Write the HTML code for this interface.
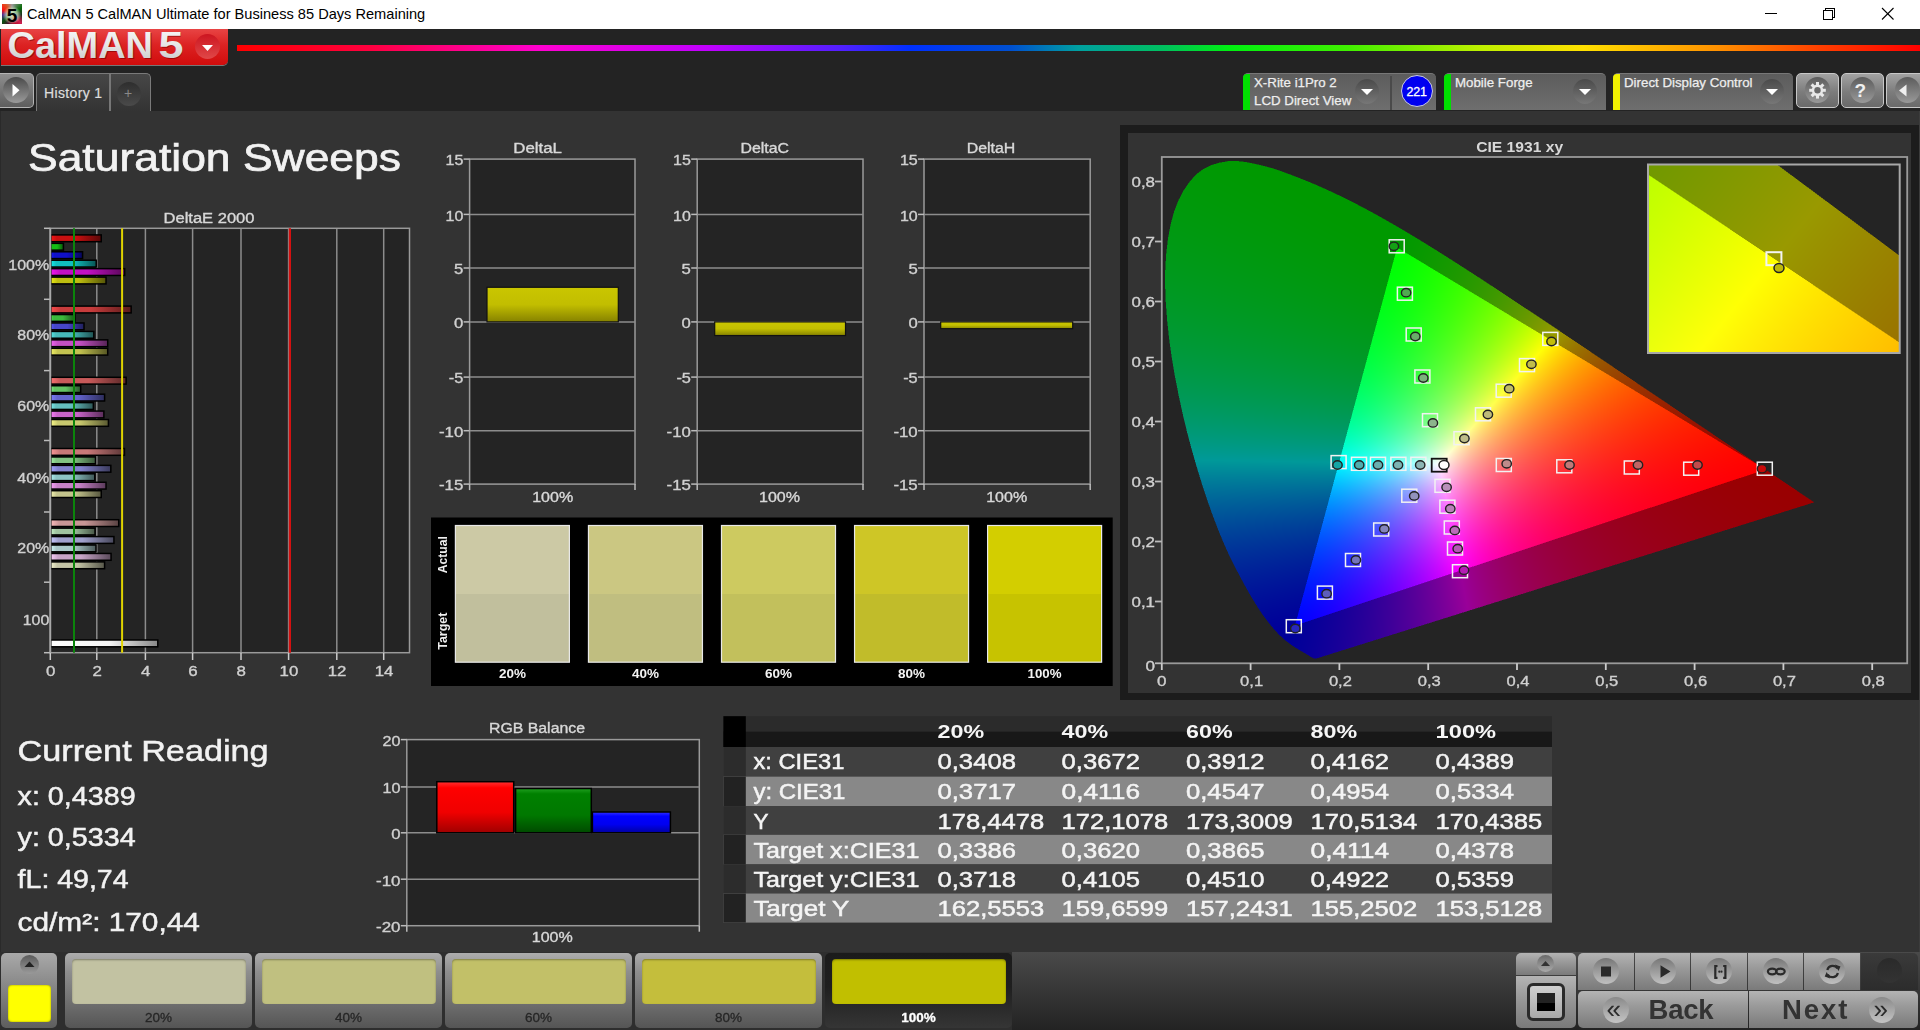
<!DOCTYPE html>
<html><head><meta charset="utf-8"><title>CalMAN</title>
<style>
html,body{margin:0;padding:0}
body{width:1920px;height:1030px;overflow:hidden;position:relative;background:#333;font-family:"Liberation Sans",sans-serif}
svg text{font-family:"Liberation Sans",sans-serif}
</style></head><body>
<div style="position:absolute;left:0px;top:0px;width:1920px;height:29px;background:#fff"></div><div style="position:absolute;left:2px;top:4px;width:20px;height:20px;background:radial-gradient(circle at 50% 55%,rgba(215,245,200,.95) 0,rgba(200,225,190,.7) 38%,rgba(0,0,0,0) 62%),conic-gradient(from 0deg,#9a9a9a 0deg,#0a6a0a 55deg,#203020 95deg,#d02050 135deg,#b00020 170deg,#4a1030 200deg,#0a5010 230deg,#4a2a90 265deg,#ff1010 295deg,#e05020 325deg,#9a9a9a 360deg)"></div><svg style="position:absolute;left:2px;top:4px" width="20" height="20"><text x="10" y="17.5" text-anchor="middle" font-family="Liberation Sans" font-weight="700" font-size="19" fill="#000">5</text></svg><div style="position:absolute;left:27px;top:7px;font-size:14.6px;line-height:14.6px;color:#000;font-weight:400;white-space:nowrap;">CalMAN 5 CalMAN Ultimate for Business 85 Days Remaining</div><svg style="position:absolute;left:1750px;top:0" width="170" height="29"><g stroke="#000" stroke-width="1" fill="none" shape-rendering="crispEdges"><line x1="15" y1="13.5" x2="27" y2="13.5"/><rect x="73.5" y="10.5" width="9" height="9"/><path d="M75.5 10.5 V8.5 H84.5 V17.5 H82.5"/></g><g stroke="#000" stroke-width="1.1" fill="none"><line x1="132" y1="8" x2="143.5" y2="19.5"/><line x1="143.5" y1="8" x2="132" y2="19.5"/></g></svg><div style="position:absolute;left:0px;top:29px;width:1920px;height:82px;background:#232323"></div><div style="position:absolute;left:1px;top:29px;width:227px;height:36px;background:linear-gradient(#e84444,#dc2222 45%,#d10c0c);border-radius:0 0 5px 0;box-shadow:0 1px 0 #777"></div><svg style="position:absolute;left:0;top:26px" width="230" height="40"><defs><linearGradient id="lg" x1="0" x2="0" y1="0" y2="1"><stop offset="0" stop-color="#fafafa"/><stop offset="0.5" stop-color="#e6e6e6"/><stop offset="1" stop-color="#c4c4c4"/></linearGradient></defs><g font-family="Liberation Sans" font-weight="700" font-size="36"><text x="8.5" y="32.8" fill="#7a0000" opacity="0.6" textLength="145.5" lengthAdjust="spacingAndGlyphs">CalMAN</text><text x="159.5" y="32.8" fill="#7a0000" opacity="0.6" textLength="24" lengthAdjust="spacingAndGlyphs">5</text><text x="7.5" y="31.8" fill="url(#lg)" textLength="145.5" lengthAdjust="spacingAndGlyphs">CalMAN</text><text x="158.5" y="31.8" fill="url(#lg)" textLength="25" lengthAdjust="spacingAndGlyphs">5</text></g></svg><div style="position:absolute;left:195px;top:34px;width:25px;height:25px;border-radius:50%;background:linear-gradient(#cc1520,#e04848)"></div><svg style="position:absolute;left:195px;top:34px" width="25" height="25"><path d="M7 11 H18 L12.5 17 Z" fill="#fff"/></svg><div style="position:absolute;left:237px;top:45px;width:1683px;height:6px;background:linear-gradient(to right,#ff0000 0%,#ff0040 8%,#ff00d0 18%,#c000ff 28%,#5020ff 36%,#0030ff 40%,#0050d0 46%,#00a0a0 50%,#00c060 55%,#00f010 59%,#40f000 66%,#c0f000 74%,#ffe000 80%,#ff9000 88%,#ff4000 94%,#ff0000 100%)"></div><div style="position:absolute;left:0px;top:73px;width:34px;height:35px;background:linear-gradient(#8e8e8e,#5e5e5e);border:1.5px solid #b4b4b4;border-left:none;border-radius:0 5px 5px 0;box-sizing:border-box"></div><div style="position:absolute;left:3px;top:77px;width:26px;height:26px;border-radius:50%;background:linear-gradient(#4a4a4a,#9a9a9a)"></div><svg style="position:absolute;left:0;top:73px" width="34" height="34"><path d="M12.5 11 L19.5 17.3 L12.5 23.6 Z" fill="#fff"/></svg><div style="position:absolute;left:36px;top:73px;width:115px;height:38px;background:linear-gradient(#474747,#333);border:1.5px solid #7a7a7a;border-bottom:none;border-radius:5px 5px 0 0;box-sizing:border-box"></div><div style="position:absolute;left:109px;top:74px;width:1.5px;height:37px;background:#777"></div><div style="position:absolute;left:44px;top:85.5px;font-size:14px;line-height:14px;color:#ddd;font-weight:400;white-space:nowrap;letter-spacing:0.35px;-webkit-text-stroke:0.2px #ddd">History 1</div><div style="position:absolute;left:117px;top:82px;width:24px;height:24px;border-radius:50%;background:linear-gradient(#2e2e2e,#4a4a4a)"></div><div style="position:absolute;left:124px;top:86px;font-size:14px;line-height:14px;color:#888;font-weight:400;white-space:nowrap;">+</div><div style="position:absolute;left:1243px;top:73px;width:193px;height:37px;background:linear-gradient(#5c5c5c,#6e6e6e);border-radius:5px 5px 0 0;border-top:1px solid #777;box-sizing:border-box"></div><div style="position:absolute;left:1243px;top:74px;width:7px;height:36px;background:linear-gradient(#00e000,#00e000);border-radius:4px 0 0 0"></div><div style="position:absolute;left:1254px;top:76.0px;font-size:13.3px;line-height:13.3px;color:#eee;font-weight:400;white-space:nowrap;-webkit-text-stroke:0.25px #eee">X-Rite i1Pro 2</div><div style="position:absolute;left:1254px;top:93.5px;font-size:13.3px;line-height:13.3px;color:#eee;font-weight:400;white-space:nowrap;-webkit-text-stroke:0.25px #eee">LCD Direct View</div><div style="position:absolute;left:1355px;top:79px;width:24px;height:25px;border-radius:50%;background:linear-gradient(#4a4a4a,#777)"></div><svg style="position:absolute;left:1355px;top:79px" width="24" height="25"><path d="M6 10 H18 L12 16 Z" fill="#fff"/></svg><div style="position:absolute;left:1390px;top:76px;width:2px;height:34px;background:#4a4a4a"></div><div style="position:absolute;left:1401px;top:75px;width:32px;height:32px;border-radius:50%;background:#0000f0;border:1.5px solid #ccd;box-sizing:border-box"></div><div style="position:absolute;left:1406.5px;top:85.5px;font-size:12.5px;line-height:12.5px;color:#fff;font-weight:400;white-space:nowrap;letter-spacing:-0.2px;-webkit-text-stroke:0.3px #fff">221</div><div style="position:absolute;left:1444px;top:73px;width:162px;height:37px;background:linear-gradient(#5c5c5c,#6e6e6e);border-radius:5px 5px 0 0;border-top:1px solid #777;box-sizing:border-box"></div><div style="position:absolute;left:1444px;top:74px;width:7px;height:36px;background:linear-gradient(#00e000,#00e000);border-radius:4px 0 0 0"></div><div style="position:absolute;left:1455px;top:76.0px;font-size:13.3px;line-height:13.3px;color:#eee;font-weight:400;white-space:nowrap;-webkit-text-stroke:0.25px #eee">Mobile Forge</div><div style="position:absolute;left:1573px;top:79px;width:24px;height:25px;border-radius:50%;background:linear-gradient(#4a4a4a,#777)"></div><svg style="position:absolute;left:1573px;top:79px" width="24" height="25"><path d="M6 10 H18 L12 16 Z" fill="#fff"/></svg><div style="position:absolute;left:1613px;top:73px;width:180px;height:37px;background:linear-gradient(#5c5c5c,#6e6e6e);border-radius:5px 5px 0 0;border-top:1px solid #777;box-sizing:border-box"></div><div style="position:absolute;left:1613px;top:74px;width:7px;height:36px;background:linear-gradient(#f0f000,#f0f000);border-radius:4px 0 0 0"></div><div style="position:absolute;left:1624px;top:76.0px;font-size:13.3px;line-height:13.3px;color:#eee;font-weight:400;white-space:nowrap;-webkit-text-stroke:0.25px #eee">Direct Display Control</div><div style="position:absolute;left:1760px;top:79px;width:24px;height:25px;border-radius:50%;background:linear-gradient(#4a4a4a,#777)"></div><svg style="position:absolute;left:1760px;top:79px" width="24" height="25"><path d="M6 10 H18 L12 16 Z" fill="#fff"/></svg><div style="position:absolute;left:1796px;top:73px;width:43px;height:35px;background:linear-gradient(#a2a2a2,#7c7c7c 55%,#6a6a6a);border:1.5px solid #c8c8c8;border-radius:5px;box-sizing:border-box"></div><div style="position:absolute;left:1805px;top:77px;width:25px;height:26px;border-radius:50%;background:linear-gradient(#5c5c5c,#999)"></div><div style="position:absolute;left:1841px;top:73px;width:43px;height:35px;background:linear-gradient(#a2a2a2,#7c7c7c 55%,#6a6a6a);border:1.5px solid #c8c8c8;border-radius:5px;box-sizing:border-box"></div><div style="position:absolute;left:1850px;top:77px;width:25px;height:26px;border-radius:50%;background:linear-gradient(#5c5c5c,#999)"></div><div style="position:absolute;left:1886px;top:73px;width:43px;height:35px;background:linear-gradient(#a2a2a2,#7c7c7c 55%,#6a6a6a);border:1.5px solid #c8c8c8;border-radius:5px;box-sizing:border-box"></div><div style="position:absolute;left:1895px;top:77px;width:25px;height:26px;border-radius:50%;background:linear-gradient(#5c5c5c,#999)"></div><svg style="position:absolute;left:1796px;top:73px" width="43" height="35"><g fill="#e8e8e8"><circle cx="21.5" cy="17.3" r="5.8"/><rect x="20" y="9" width="3" height="4" transform="rotate(0 21.5 17.3)"/><rect x="20" y="9" width="3" height="4" transform="rotate(45 21.5 17.3)"/><rect x="20" y="9" width="3" height="4" transform="rotate(90 21.5 17.3)"/><rect x="20" y="9" width="3" height="4" transform="rotate(135 21.5 17.3)"/><rect x="20" y="9" width="3" height="4" transform="rotate(180 21.5 17.3)"/><rect x="20" y="9" width="3" height="4" transform="rotate(225 21.5 17.3)"/><rect x="20" y="9" width="3" height="4" transform="rotate(270 21.5 17.3)"/><rect x="20" y="9" width="3" height="4" transform="rotate(315 21.5 17.3)"/></g><circle cx="21.5" cy="17.3" r="3.2" fill="#6a6a6a"/></svg><div style="position:absolute;left:1854.5px;top:81px;font-size:19px;line-height:19px;color:#f0f0f0;font-weight:700;white-space:nowrap;">?</div><svg style="position:absolute;left:1886px;top:73px" width="34" height="35"><path d="M20.5 11.5 L13 17.5 L20.5 23.5 Z" fill="#f0f0f0"/></svg>
<div style="position:absolute;left:0;top:111px;width:1px;height:841px;background:#2a2a2a"></div>
<div style="position:absolute;left:1919px;top:111px;width:1px;height:841px;background:#3c3c3c"></div>
<div style="position:absolute;left:1120px;top:125px;width:799px;height:575px;background:#1c1c1c"></div>
<div style="position:absolute;left:1128px;top:133px;width:783px;height:560px;background:#333"></div>
<svg style="position:absolute;left:0;top:0" width="1920" height="1030"><defs><clipPath id="plotclip"><rect x="1161" y="157" width="747" height="507"/></clipPath></defs><rect x="1161" y="157" width="747" height="507" fill="#242424"/><g clip-path="url(#plotclip)"><polygon points="1439.5,464.1 1316.4,658.5 1316.3,658.5" fill="#170099" stroke="#170099" stroke-width="0.6"/><polygon points="1439.5,464.1 1316.3,658.5 1316.1,658.6" fill="#170099" stroke="#170099" stroke-width="0.6"/><polygon points="1439.5,464.1 1316.1,658.6 1315.9,658.6" fill="#160099" stroke="#160099" stroke-width="0.6"/><polygon points="1439.5,464.1 1315.9,658.6 1315.7,658.6" fill="#160099" stroke="#160099" stroke-width="0.6"/><polygon points="1439.5,464.1 1315.7,658.6 1315.4,658.6" fill="#160099" stroke="#160099" stroke-width="0.6"/><polygon points="1439.5,464.1 1315.4,658.6 1315.1,658.6" fill="#160099" stroke="#160099" stroke-width="0.6"/><polygon points="1439.5,464.1 1315.1,658.6 1314.6,658.6" fill="#160099" stroke="#160099" stroke-width="0.6"/><polygon points="1439.5,464.1 1314.6,658.6 1314.0,658.4" fill="#160099" stroke="#160099" stroke-width="0.6"/><polygon points="1439.5,464.1 1314.0,658.4 1313.5,658.3" fill="#150099" stroke="#150099" stroke-width="0.6"/><polygon points="1439.5,464.1 1313.5,658.3 1313.0,658.0" fill="#150099" stroke="#150099" stroke-width="0.6"/><polygon points="1439.5,464.1 1313.0,658.0 1312.5,657.7" fill="#150099" stroke="#150099" stroke-width="0.6"/><polygon points="1439.5,464.1 1312.5,657.7 1311.8,657.4" fill="#140099" stroke="#140099" stroke-width="0.6"/><polygon points="1439.5,464.1 1311.8,657.4 1311.0,656.9" fill="#140099" stroke="#140099" stroke-width="0.6"/><polygon points="1439.5,464.1 1311.0,656.9 1310.0,656.3" fill="#130099" stroke="#130099" stroke-width="0.6"/><polygon points="1439.5,464.1 1310.0,656.3 1309.0,655.7" fill="#130099" stroke="#130099" stroke-width="0.6"/><polygon points="1439.5,464.1 1309.0,655.7 1307.8,655.0" fill="#120099" stroke="#120099" stroke-width="0.6"/><polygon points="1439.5,464.1 1307.8,655.0 1306.4,654.1" fill="#120099" stroke="#120099" stroke-width="0.6"/><polygon points="1439.5,464.1 1306.4,654.1 1304.9,653.2" fill="#110099" stroke="#110099" stroke-width="0.6"/><polygon points="1439.5,464.1 1304.9,653.2 1303.0,652.1" fill="#100099" stroke="#100099" stroke-width="0.6"/><polygon points="1439.5,464.1 1303.0,652.1 1300.9,650.9" fill="#0f0099" stroke="#0f0099" stroke-width="0.6"/><polygon points="1439.5,464.1 1300.9,650.9 1298.5,649.5" fill="#0d0099" stroke="#0d0099" stroke-width="0.6"/><polygon points="1439.5,464.1 1298.5,649.5 1295.9,647.9" fill="#0c0099" stroke="#0c0099" stroke-width="0.6"/><polygon points="1439.5,464.1 1295.9,647.9 1292.9,646.0" fill="#0b0199" stroke="#0b0199" stroke-width="0.6"/><polygon points="1439.5,464.1 1292.9,646.0 1289.7,643.7" fill="#090299" stroke="#090299" stroke-width="0.6"/><polygon points="1439.5,464.1 1289.7,643.7 1286.1,641.0" fill="#070399" stroke="#070399" stroke-width="0.6"/><polygon points="1439.5,464.1 1286.1,641.0 1282.1,637.6" fill="#060599" stroke="#060599" stroke-width="0.6"/><polygon points="1439.5,464.1 1282.1,637.6 1277.4,632.9" fill="#030799" stroke="#030799" stroke-width="0.6"/><polygon points="1439.5,464.1 1277.4,632.9 1272.0,626.8" fill="#010999" stroke="#010999" stroke-width="0.6"/><polygon points="1439.5,464.1 1272.0,626.8 1265.9,619.2" fill="#000d99" stroke="#000d99" stroke-width="0.6"/><polygon points="1439.5,464.1 1265.9,619.2 1259.1,609.4" fill="#001299" stroke="#001299" stroke-width="0.6"/><polygon points="1439.5,464.1 1259.1,609.4 1251.4,597.1" fill="#001899" stroke="#001899" stroke-width="0.6"/><polygon points="1439.5,464.1 1251.4,597.1 1242.9,581.9" fill="#002199" stroke="#002199" stroke-width="0.6"/><polygon points="1439.5,464.1 1242.9,581.9 1233.1,563.3" fill="#002c99" stroke="#002c99" stroke-width="0.6"/><polygon points="1439.5,464.1 1233.1,563.3 1222.8,541.1" fill="#003c99" stroke="#003c99" stroke-width="0.6"/><polygon points="1439.5,464.1 1222.8,541.1 1212.4,514.7" fill="#005099" stroke="#005099" stroke-width="0.6"/><polygon points="1439.5,464.1 1212.4,514.7 1202.1,484.5" fill="#006b99" stroke="#006b99" stroke-width="0.6"/><polygon points="1439.5,464.1 1202.1,484.5 1191.9,450.4" fill="#008f99" stroke="#008f99" stroke-width="0.6"/><polygon points="1439.5,464.1 1191.9,450.4 1182.7,413.9" fill="#009979" stroke="#009979" stroke-width="0.6"/><polygon points="1439.5,464.1 1182.7,413.9 1174.9,376.1" fill="#00995b" stroke="#00995b" stroke-width="0.6"/><polygon points="1439.5,464.1 1174.9,376.1 1169.1,338.5" fill="#009945" stroke="#009945" stroke-width="0.6"/><polygon points="1439.5,464.1 1169.1,338.5 1165.8,302.4" fill="#009934" stroke="#009934" stroke-width="0.6"/><polygon points="1439.5,464.1 1165.8,302.4 1165.3,268.6" fill="#009927" stroke="#009927" stroke-width="0.6"/><polygon points="1439.5,464.1 1165.3,268.6 1168.1,238.0" fill="#00991e" stroke="#00991e" stroke-width="0.6"/><polygon points="1439.5,464.1 1168.1,238.0 1174.1,211.4" fill="#009916" stroke="#009916" stroke-width="0.6"/><polygon points="1439.5,464.1 1174.1,211.4 1183.8,190.1" fill="#009910" stroke="#009910" stroke-width="0.6"/><polygon points="1439.5,464.1 1183.8,190.1 1196.3,174.3" fill="#00990c" stroke="#00990c" stroke-width="0.6"/><polygon points="1439.5,464.1 1196.3,174.3 1211.2,165.2" fill="#009909" stroke="#009909" stroke-width="0.6"/><polygon points="1439.5,464.1 1211.2,165.2 1227.8,161.2" fill="#009907" stroke="#009907" stroke-width="0.6"/><polygon points="1439.5,464.1 1227.8,161.2 1245.2,161.9" fill="#009906" stroke="#009906" stroke-width="0.6"/><polygon points="1439.5,464.1 1245.2,161.9 1263.2,165.8" fill="#009905" stroke="#009905" stroke-width="0.6"/><polygon points="1439.5,464.1 1263.2,165.8 1281.3,171.2" fill="#009904" stroke="#009904" stroke-width="0.6"/><polygon points="1439.5,464.1 1281.3,171.2 1299.2,178.0" fill="#009904" stroke="#009904" stroke-width="0.6"/><polygon points="1439.5,464.1 1299.2,178.0 1316.3,185.0" fill="#009903" stroke="#009903" stroke-width="0.6"/><polygon points="1439.5,464.1 1316.3,185.0 1333.1,192.5" fill="#009903" stroke="#009903" stroke-width="0.6"/><polygon points="1439.5,464.1 1333.1,192.5 1349.5,200.5" fill="#009903" stroke="#009903" stroke-width="0.6"/><polygon points="1439.5,464.1 1349.5,200.5 1365.7,208.9" fill="#009903" stroke="#009903" stroke-width="0.6"/><polygon points="1439.5,464.1 1365.7,208.9 1381.8,217.7" fill="#009903" stroke="#009903" stroke-width="0.6"/><polygon points="1439.5,464.1 1381.8,217.7 1397.8,226.9" fill="#029903" stroke="#029903" stroke-width="0.6"/><polygon points="1439.5,464.1 1397.8,226.9 1413.8,236.4" fill="#089903" stroke="#089903" stroke-width="0.6"/><polygon points="1439.5,464.1 1413.8,236.4 1429.6,246.1" fill="#0f9903" stroke="#0f9903" stroke-width="0.6"/><polygon points="1439.5,464.1 1429.6,246.1 1445.5,256.0" fill="#179903" stroke="#179903" stroke-width="0.6"/><polygon points="1439.5,464.1 1445.5,256.0 1461.3,266.2" fill="#219903" stroke="#219903" stroke-width="0.6"/><polygon points="1439.5,464.1 1461.3,266.2 1477.2,276.4" fill="#2c9904" stroke="#2c9904" stroke-width="0.6"/><polygon points="1439.5,464.1 1477.2,276.4 1493.1,286.8" fill="#3a9904" stroke="#3a9904" stroke-width="0.6"/><polygon points="1439.5,464.1 1493.1,286.8 1508.9,297.3" fill="#499905" stroke="#499905" stroke-width="0.6"/><polygon points="1439.5,464.1 1508.9,297.3 1524.7,307.7" fill="#5a9905" stroke="#5a9905" stroke-width="0.6"/><polygon points="1439.5,464.1 1524.7,307.7 1540.5,318.2" fill="#6f9906" stroke="#6f9906" stroke-width="0.6"/><polygon points="1439.5,464.1 1540.5,318.2 1556.2,328.7" fill="#869907" stroke="#869907" stroke-width="0.6"/><polygon points="1439.5,464.1 1556.2,328.7 1571.7,339.1" fill="#999007" stroke="#999007" stroke-width="0.6"/><polygon points="1439.5,464.1 1571.7,339.1 1587.0,349.4" fill="#997807" stroke="#997807" stroke-width="0.6"/><polygon points="1439.5,464.1 1587.0,349.4 1602.1,359.5" fill="#996406" stroke="#996406" stroke-width="0.6"/><polygon points="1439.5,464.1 1602.1,359.5 1616.9,369.5" fill="#995406" stroke="#995406" stroke-width="0.6"/><polygon points="1439.5,464.1 1616.9,369.5 1631.4,379.3" fill="#994706" stroke="#994706" stroke-width="0.6"/><polygon points="1439.5,464.1 1631.4,379.3 1645.6,388.9" fill="#993b06" stroke="#993b06" stroke-width="0.6"/><polygon points="1439.5,464.1 1645.6,388.9 1659.3,398.1" fill="#993205" stroke="#993205" stroke-width="0.6"/><polygon points="1439.5,464.1 1659.3,398.1 1672.6,407.0" fill="#992905" stroke="#992905" stroke-width="0.6"/><polygon points="1439.5,464.1 1672.6,407.0 1685.2,415.5" fill="#992205" stroke="#992205" stroke-width="0.6"/><polygon points="1439.5,464.1 1685.2,415.5 1697.2,423.6" fill="#991d05" stroke="#991d05" stroke-width="0.6"/><polygon points="1439.5,464.1 1697.2,423.6 1708.2,431.0" fill="#991805" stroke="#991805" stroke-width="0.6"/><polygon points="1439.5,464.1 1708.2,431.0 1718.6,438.0" fill="#991305" stroke="#991305" stroke-width="0.6"/><polygon points="1439.5,464.1 1718.6,438.0 1728.3,444.6" fill="#991005" stroke="#991005" stroke-width="0.6"/><polygon points="1439.5,464.1 1728.3,444.6 1737.4,450.7" fill="#990d05" stroke="#990d05" stroke-width="0.6"/><polygon points="1439.5,464.1 1737.4,450.7 1745.6,456.1" fill="#990a04" stroke="#990a04" stroke-width="0.6"/><polygon points="1439.5,464.1 1745.6,456.1 1753.0,461.1" fill="#990804" stroke="#990804" stroke-width="0.6"/><polygon points="1439.5,464.1 1753.0,461.1 1759.7,465.6" fill="#990604" stroke="#990604" stroke-width="0.6"/><polygon points="1439.5,464.1 1759.7,465.6 1765.7,469.7" fill="#990504" stroke="#990504" stroke-width="0.6"/><polygon points="1439.5,464.1 1765.7,469.7 1771.1,473.3" fill="#990404" stroke="#990404" stroke-width="0.6"/><polygon points="1439.5,464.1 1771.1,473.3 1775.9,476.5" fill="#990304" stroke="#990304" stroke-width="0.6"/><polygon points="1439.5,464.1 1775.9,476.5 1780.1,479.4" fill="#990204" stroke="#990204" stroke-width="0.6"/><polygon points="1439.5,464.1 1780.1,479.4 1783.9,481.9" fill="#990104" stroke="#990104" stroke-width="0.6"/><polygon points="1439.5,464.1 1783.9,481.9 1787.3,484.2" fill="#990104" stroke="#990104" stroke-width="0.6"/><polygon points="1439.5,464.1 1787.3,484.2 1790.4,486.3" fill="#990004" stroke="#990004" stroke-width="0.6"/><polygon points="1439.5,464.1 1790.4,486.3 1793.3,488.2" fill="#990004" stroke="#990004" stroke-width="0.6"/><polygon points="1439.5,464.1 1793.3,488.2 1795.8,490.0" fill="#990004" stroke="#990004" stroke-width="0.6"/><polygon points="1439.5,464.1 1795.8,490.0 1798.2,491.5" fill="#990004" stroke="#990004" stroke-width="0.6"/><polygon points="1439.5,464.1 1798.2,491.5 1800.3,493.0" fill="#990004" stroke="#990004" stroke-width="0.6"/><polygon points="1439.5,464.1 1800.3,493.0 1802.2,494.2" fill="#990004" stroke="#990004" stroke-width="0.6"/><polygon points="1439.5,464.1 1802.2,494.2 1803.8,495.3" fill="#990004" stroke="#990004" stroke-width="0.6"/><polygon points="1439.5,464.1 1803.8,495.3 1805.2,496.2" fill="#990004" stroke="#990004" stroke-width="0.6"/><polygon points="1439.5,464.1 1805.2,496.2 1806.5,497.1" fill="#990004" stroke="#990004" stroke-width="0.6"/><polygon points="1439.5,464.1 1806.5,497.1 1808.2,498.2" fill="#990004" stroke="#990004" stroke-width="0.6"/><polygon points="1439.5,464.1 1808.2,498.2 1810.0,499.5" fill="#990004" stroke="#990004" stroke-width="0.6"/><polygon points="1439.5,464.1 1810.0,499.5 1812.3,501.1" fill="#990004" stroke="#990004" stroke-width="0.6"/><polygon points="1439.5,464.1 1812.3,501.1 1814.2,502.3" fill="#990004" stroke="#990004" stroke-width="0.6"/><polygon points="1439.5,464.1 1814.2,502.3 1793.5,508.8" fill="#990005" stroke="#990005" stroke-width="0.6"/><polygon points="1439.5,464.1 1793.5,508.8 1772.7,515.3" fill="#990008" stroke="#990008" stroke-width="0.6"/><polygon points="1439.5,464.1 1772.7,515.3 1752.0,521.8" fill="#99000b" stroke="#99000b" stroke-width="0.6"/><polygon points="1439.5,464.1 1752.0,521.8 1731.2,528.4" fill="#99000e" stroke="#99000e" stroke-width="0.6"/><polygon points="1439.5,464.1 1731.2,528.4 1710.5,534.9" fill="#990012" stroke="#990012" stroke-width="0.6"/><polygon points="1439.5,464.1 1710.5,534.9 1689.8,541.4" fill="#990016" stroke="#990016" stroke-width="0.6"/><polygon points="1439.5,464.1 1689.8,541.4 1669.0,547.9" fill="#99001b" stroke="#99001b" stroke-width="0.6"/><polygon points="1439.5,464.1 1669.0,547.9 1648.3,554.4" fill="#990020" stroke="#990020" stroke-width="0.6"/><polygon points="1439.5,464.1 1648.3,554.4 1627.5,560.9" fill="#990027" stroke="#990027" stroke-width="0.6"/><polygon points="1439.5,464.1 1627.5,560.9 1606.8,567.4" fill="#99002e" stroke="#99002e" stroke-width="0.6"/><polygon points="1439.5,464.1 1606.8,567.4 1586.0,573.9" fill="#990036" stroke="#990036" stroke-width="0.6"/><polygon points="1439.5,464.1 1586.0,573.9 1565.3,580.4" fill="#990040" stroke="#990040" stroke-width="0.6"/><polygon points="1439.5,464.1 1565.3,580.4 1544.6,586.9" fill="#99004b" stroke="#99004b" stroke-width="0.6"/><polygon points="1439.5,464.1 1544.6,586.9 1523.8,593.4" fill="#990059" stroke="#990059" stroke-width="0.6"/><polygon points="1439.5,464.1 1523.8,593.4 1503.1,599.9" fill="#990069" stroke="#990069" stroke-width="0.6"/><polygon points="1439.5,464.1 1503.1,599.9 1482.3,606.4" fill="#99007c" stroke="#99007c" stroke-width="0.6"/><polygon points="1439.5,464.1 1482.3,606.4 1461.6,612.9" fill="#990094" stroke="#990094" stroke-width="0.6"/><polygon points="1439.5,464.1 1461.6,612.9 1440.9,619.5" fill="#830099" stroke="#830099" stroke-width="0.6"/><polygon points="1439.5,464.1 1440.9,619.5 1420.1,626.0" fill="#6c0099" stroke="#6c0099" stroke-width="0.6"/><polygon points="1439.5,464.1 1420.1,626.0 1399.4,632.5" fill="#580099" stroke="#580099" stroke-width="0.6"/><polygon points="1439.5,464.1 1399.4,632.5 1378.6,639.0" fill="#460099" stroke="#460099" stroke-width="0.6"/><polygon points="1439.5,464.1 1378.6,639.0 1357.9,645.5" fill="#360099" stroke="#360099" stroke-width="0.6"/><polygon points="1439.5,464.1 1357.9,645.5 1337.1,652.0" fill="#280099" stroke="#280099" stroke-width="0.6"/><polygon points="1439.5,464.1 1337.1,652.0 1316.4,658.5" fill="#1c0099" stroke="#1c0099" stroke-width="0.6"/><polygon points="1295.0,625.5 1328.6,614.4 1302.3,598.5" fill="#0604ff" stroke="#0604ff" stroke-width="0.6"/><polygon points="1328.6,614.4 1335.9,587.4 1302.3,598.5" fill="#0f0aff" stroke="#0f0aff" stroke-width="0.6"/><polygon points="1302.3,598.5 1335.9,587.4 1309.6,571.5" fill="#0618ff" stroke="#0618ff" stroke-width="0.6"/><polygon points="1335.9,587.4 1343.2,560.4 1309.6,571.5" fill="#1122ff" stroke="#1122ff" stroke-width="0.6"/><polygon points="1309.6,571.5 1343.2,560.4 1316.9,544.5" fill="#0735ff" stroke="#0735ff" stroke-width="0.6"/><polygon points="1343.2,560.4 1350.5,533.4 1316.9,544.5" fill="#1343ff" stroke="#1343ff" stroke-width="0.6"/><polygon points="1316.9,544.5 1350.5,533.4 1324.2,517.5" fill="#085bff" stroke="#085bff" stroke-width="0.6"/><polygon points="1350.5,533.4 1357.8,506.4 1324.2,517.5" fill="#156eff" stroke="#156eff" stroke-width="0.6"/><polygon points="1324.2,517.5 1357.8,506.4 1331.5,490.5" fill="#098dff" stroke="#098dff" stroke-width="0.6"/><polygon points="1357.8,506.4 1365.1,479.4 1331.5,490.5" fill="#18a8ff" stroke="#18a8ff" stroke-width="0.6"/><polygon points="1331.5,490.5 1365.1,479.4 1338.8,463.5" fill="#0bcfff" stroke="#0bcfff" stroke-width="0.6"/><polygon points="1365.1,479.4 1372.4,452.4 1338.8,463.5" fill="#1cf7ff" stroke="#1cf7ff" stroke-width="0.6"/><polygon points="1338.8,463.5 1372.4,452.4 1346.1,436.5" fill="#0bffda" stroke="#0bffda" stroke-width="0.6"/><polygon points="1372.4,452.4 1379.7,425.4 1346.1,436.5" fill="#18ffb7" stroke="#18ffb7" stroke-width="0.6"/><polygon points="1346.1,436.5 1379.7,425.4 1353.4,409.5" fill="#09ff99" stroke="#09ff99" stroke-width="0.6"/><polygon points="1379.7,425.4 1387.0,398.4 1353.4,409.5" fill="#14ff7f" stroke="#14ff7f" stroke-width="0.6"/><polygon points="1353.4,409.5 1387.0,398.4 1360.6,382.5" fill="#08ff6b" stroke="#08ff6b" stroke-width="0.6"/><polygon points="1387.0,398.4 1394.3,371.4 1360.6,382.5" fill="#11ff57" stroke="#11ff57" stroke-width="0.6"/><polygon points="1360.6,382.5 1394.3,371.4 1367.9,355.5" fill="#07ff48" stroke="#07ff48" stroke-width="0.6"/><polygon points="1394.3,371.4 1401.6,344.4 1367.9,355.5" fill="#0fff39" stroke="#0fff39" stroke-width="0.6"/><polygon points="1367.9,355.5 1401.6,344.4 1375.2,328.5" fill="#06ff2f" stroke="#06ff2f" stroke-width="0.6"/><polygon points="1401.6,344.4 1408.9,317.4 1375.2,328.5" fill="#0dff22" stroke="#0dff22" stroke-width="0.6"/><polygon points="1375.2,328.5 1408.9,317.4 1382.5,301.5" fill="#05ff1b" stroke="#05ff1b" stroke-width="0.6"/><polygon points="1408.9,317.4 1416.1,290.4 1382.5,301.5" fill="#0cff11" stroke="#0cff11" stroke-width="0.6"/><polygon points="1382.5,301.5 1416.1,290.4 1389.8,274.5" fill="#05ff0c" stroke="#05ff0c" stroke-width="0.6"/><polygon points="1416.1,290.4 1423.4,263.4 1389.8,274.5" fill="#0bff05" stroke="#0bff05" stroke-width="0.6"/><polygon points="1389.8,274.5 1423.4,263.4 1397.1,247.5" fill="#04ff02" stroke="#04ff02" stroke-width="0.6"/><polygon points="1328.6,614.4 1362.2,603.2 1335.9,587.4" fill="#2404ff" stroke="#2404ff" stroke-width="0.6"/><polygon points="1362.2,603.2 1369.5,576.2 1335.9,587.4" fill="#330bff" stroke="#330bff" stroke-width="0.6"/><polygon points="1335.9,587.4 1369.5,576.2 1343.2,560.4" fill="#281bff" stroke="#281bff" stroke-width="0.6"/><polygon points="1369.5,576.2 1376.8,549.2 1343.2,560.4" fill="#3926ff" stroke="#3926ff" stroke-width="0.6"/><polygon points="1343.2,560.4 1376.8,549.2 1350.5,533.4" fill="#2d3bff" stroke="#2d3bff" stroke-width="0.6"/><polygon points="1376.8,549.2 1384.1,522.2 1350.5,533.4" fill="#404bff" stroke="#404bff" stroke-width="0.6"/><polygon points="1350.5,533.4 1384.1,522.2 1357.8,506.4" fill="#3367ff" stroke="#3367ff" stroke-width="0.6"/><polygon points="1384.1,522.2 1391.4,495.2 1357.8,506.4" fill="#497eff" stroke="#497eff" stroke-width="0.6"/><polygon points="1357.8,506.4 1391.4,495.2 1365.1,479.4" fill="#3ba2ff" stroke="#3ba2ff" stroke-width="0.6"/><polygon points="1391.4,495.2 1398.7,468.2 1365.1,479.4" fill="#55c3ff" stroke="#55c3ff" stroke-width="0.6"/><polygon points="1365.1,479.4 1398.7,468.2 1372.4,452.4" fill="#44f2ff" stroke="#44f2ff" stroke-width="0.6"/><polygon points="1398.7,468.2 1406.0,441.2 1372.4,452.4" fill="#58ffde" stroke="#58ffde" stroke-width="0.6"/><polygon points="1372.4,452.4 1406.0,441.2 1379.7,425.4" fill="#3affb7" stroke="#3affb7" stroke-width="0.6"/><polygon points="1406.0,441.2 1413.3,414.2 1379.7,425.4" fill="#48ff96" stroke="#48ff96" stroke-width="0.6"/><polygon points="1379.7,425.4 1413.3,414.2 1387.0,398.4" fill="#31ff7c" stroke="#31ff7c" stroke-width="0.6"/><polygon points="1413.3,414.2 1420.6,387.2 1387.0,398.4" fill="#3dff64" stroke="#3dff64" stroke-width="0.6"/><polygon points="1387.0,398.4 1420.6,387.2 1394.3,371.4" fill="#2aff53" stroke="#2aff53" stroke-width="0.6"/><polygon points="1420.6,387.2 1427.9,360.2 1394.3,371.4" fill="#34ff41" stroke="#34ff41" stroke-width="0.6"/><polygon points="1394.3,371.4 1427.9,360.2 1401.6,344.4" fill="#24ff35" stroke="#24ff35" stroke-width="0.6"/><polygon points="1427.9,360.2 1435.2,333.2 1401.6,344.4" fill="#2eff27" stroke="#2eff27" stroke-width="0.6"/><polygon points="1401.6,344.4 1435.2,333.2 1408.9,317.4" fill="#20ff1e" stroke="#20ff1e" stroke-width="0.6"/><polygon points="1435.2,333.2 1442.5,306.2 1408.9,317.4" fill="#29ff13" stroke="#29ff13" stroke-width="0.6"/><polygon points="1408.9,317.4 1442.5,306.2 1416.1,290.4" fill="#1dff0e" stroke="#1dff0e" stroke-width="0.6"/><polygon points="1442.5,306.2 1449.8,279.2 1416.1,290.4" fill="#24ff05" stroke="#24ff05" stroke-width="0.6"/><polygon points="1416.1,290.4 1449.8,279.2 1423.4,263.4" fill="#1aff02" stroke="#1aff02" stroke-width="0.6"/><polygon points="1362.2,603.2 1395.9,592.1 1369.5,576.2" fill="#4f05ff" stroke="#4f05ff" stroke-width="0.6"/><polygon points="1395.9,592.1 1403.1,565.1 1369.5,576.2" fill="#640cff" stroke="#640cff" stroke-width="0.6"/><polygon points="1369.5,576.2 1403.1,565.1 1376.8,549.2" fill="#591eff" stroke="#591eff" stroke-width="0.6"/><polygon points="1403.1,565.1 1410.4,538.1 1376.8,549.2" fill="#712bff" stroke="#712bff" stroke-width="0.6"/><polygon points="1376.8,549.2 1410.4,538.1 1384.1,522.2" fill="#6443ff" stroke="#6443ff" stroke-width="0.6"/><polygon points="1410.4,538.1 1417.7,511.1 1384.1,522.2" fill="#8156ff" stroke="#8156ff" stroke-width="0.6"/><polygon points="1384.1,522.2 1417.7,511.1 1391.4,495.2" fill="#7376ff" stroke="#7376ff" stroke-width="0.6"/><polygon points="1417.7,511.1 1425.0,484.1 1391.4,495.2" fill="#9592ff" stroke="#9592ff" stroke-width="0.6"/><polygon points="1391.4,495.2 1425.0,484.1 1398.7,468.2" fill="#86bcff" stroke="#86bcff" stroke-width="0.6"/><polygon points="1425.0,484.1 1432.3,457.1 1398.7,468.2" fill="#b1e7ff" stroke="#b1e7ff" stroke-width="0.6"/><polygon points="1398.7,468.2 1432.3,457.1 1406.0,441.2" fill="#8dffe0" stroke="#8dffe0" stroke-width="0.6"/><polygon points="1432.3,457.1 1439.6,430.1 1406.0,441.2" fill="#9affb7" stroke="#9affb7" stroke-width="0.6"/><polygon points="1406.0,441.2 1439.6,430.1 1413.3,414.2" fill="#73ff94" stroke="#73ff94" stroke-width="0.6"/><polygon points="1439.6,430.1 1446.9,403.1 1413.3,414.2" fill="#7fff77" stroke="#7fff77" stroke-width="0.6"/><polygon points="1413.3,414.2 1446.9,403.1 1420.6,387.2" fill="#60ff61" stroke="#60ff61" stroke-width="0.6"/><polygon points="1446.9,403.1 1454.2,376.1 1420.6,387.2" fill="#6bff4b" stroke="#6bff4b" stroke-width="0.6"/><polygon points="1420.6,387.2 1454.2,376.1 1427.9,360.2" fill="#52ff3c" stroke="#52ff3c" stroke-width="0.6"/><polygon points="1454.2,376.1 1461.5,349.1 1427.9,360.2" fill="#5cff2c" stroke="#5cff2c" stroke-width="0.6"/><polygon points="1427.9,360.2 1461.5,349.1 1435.2,333.2" fill="#48ff22" stroke="#48ff22" stroke-width="0.6"/><polygon points="1461.5,349.1 1468.8,322.1 1435.2,333.2" fill="#51ff16" stroke="#51ff16" stroke-width="0.6"/><polygon points="1435.2,333.2 1468.8,322.1 1442.5,306.2" fill="#40ff0f" stroke="#40ff0f" stroke-width="0.6"/><polygon points="1468.8,322.1 1476.1,295.1 1442.5,306.2" fill="#48ff06" stroke="#48ff06" stroke-width="0.6"/><polygon points="1442.5,306.2 1476.1,295.1 1449.8,279.2" fill="#39ff02" stroke="#39ff02" stroke-width="0.6"/><polygon points="1395.9,592.1 1429.5,580.9 1403.1,565.1" fill="#8805ff" stroke="#8805ff" stroke-width="0.6"/><polygon points="1429.5,580.9 1436.8,553.9 1403.1,565.1" fill="#a60eff" stroke="#a60eff" stroke-width="0.6"/><polygon points="1403.1,565.1 1436.8,553.9 1410.4,538.1" fill="#9a22ff" stroke="#9a22ff" stroke-width="0.6"/><polygon points="1436.8,553.9 1444.1,526.9 1410.4,538.1" fill="#bd31ff" stroke="#bd31ff" stroke-width="0.6"/><polygon points="1410.4,538.1 1444.1,526.9 1417.7,511.1" fill="#b14dff" stroke="#b14dff" stroke-width="0.6"/><polygon points="1444.1,526.9 1451.4,499.9 1417.7,511.1" fill="#db64ff" stroke="#db64ff" stroke-width="0.6"/><polygon points="1417.7,511.1 1451.4,499.9 1425.0,484.1" fill="#ce89ff" stroke="#ce89ff" stroke-width="0.6"/><polygon points="1451.4,499.9 1458.6,472.9 1425.0,484.1" fill="#ffaafa" stroke="#ffaafa" stroke-width="0.6"/><polygon points="1425.0,484.1 1458.6,472.9 1432.3,457.1" fill="#f6e1ff" stroke="#f6e1ff" stroke-width="0.6"/><polygon points="1458.6,472.9 1465.9,445.9 1432.3,457.1" fill="#ffe3cd" stroke="#ffe3cd" stroke-width="0.6"/><polygon points="1432.3,457.1 1465.9,445.9 1439.6,430.1" fill="#d9ffb7" stroke="#d9ffb7" stroke-width="0.6"/><polygon points="1465.9,445.9 1473.2,418.9 1439.6,430.1" fill="#e2ff91" stroke="#e2ff91" stroke-width="0.6"/><polygon points="1439.6,430.1 1473.2,418.9 1446.9,403.1" fill="#b0ff74" stroke="#b0ff74" stroke-width="0.6"/><polygon points="1473.2,418.9 1480.5,391.9 1446.9,403.1" fill="#baff59" stroke="#baff59" stroke-width="0.6"/><polygon points="1446.9,403.1 1480.5,391.9 1454.2,376.1" fill="#94ff47" stroke="#94ff47" stroke-width="0.6"/><polygon points="1480.5,391.9 1487.8,364.9 1454.2,376.1" fill="#9dff33" stroke="#9dff33" stroke-width="0.6"/><polygon points="1454.2,376.1 1487.8,364.9 1461.5,349.1" fill="#7fff27" stroke="#7fff27" stroke-width="0.6"/><polygon points="1487.8,364.9 1495.1,337.9 1461.5,349.1" fill="#88ff19" stroke="#88ff19" stroke-width="0.6"/><polygon points="1461.5,349.1 1495.1,337.9 1468.8,322.1" fill="#6fff11" stroke="#6fff11" stroke-width="0.6"/><polygon points="1495.1,337.9 1502.4,310.9 1468.8,322.1" fill="#77ff07" stroke="#77ff07" stroke-width="0.6"/><polygon points="1468.8,322.1 1502.4,310.9 1476.1,295.1" fill="#62ff02" stroke="#62ff02" stroke-width="0.6"/><polygon points="1429.5,580.9 1463.1,569.8 1436.8,553.9" fill="#d406ff" stroke="#d406ff" stroke-width="0.6"/><polygon points="1463.1,569.8 1470.4,542.8 1436.8,553.9" fill="#fd10ff" stroke="#fd10ff" stroke-width="0.6"/><polygon points="1436.8,553.9 1470.4,542.8 1444.1,526.9" fill="#f227ff" stroke="#f227ff" stroke-width="0.6"/><polygon points="1470.4,542.8 1477.7,515.8 1444.1,526.9" fill="#ff31dd" stroke="#ff31dd" stroke-width="0.6"/><polygon points="1444.1,526.9 1477.7,515.8 1451.4,499.9" fill="#ff50e5" stroke="#ff50e5" stroke-width="0.6"/><polygon points="1477.7,515.8 1485.0,488.8 1451.4,499.9" fill="#ff56bb" stroke="#ff56bb" stroke-width="0.6"/><polygon points="1451.4,499.9 1485.0,488.8 1458.6,472.9" fill="#ff7cc0" stroke="#ff7cc0" stroke-width="0.6"/><polygon points="1485.0,488.8 1492.3,461.8 1458.6,472.9" fill="#ff7f9a" stroke="#ff7f9a" stroke-width="0.6"/><polygon points="1458.6,472.9 1492.3,461.8 1465.9,445.9" fill="#ffaa9c" stroke="#ffaa9c" stroke-width="0.6"/><polygon points="1492.3,461.8 1499.6,434.8 1465.9,445.9" fill="#ffaa7a" stroke="#ffaa7a" stroke-width="0.6"/><polygon points="1465.9,445.9 1499.6,434.8 1473.2,418.9" fill="#ffda7a" stroke="#ffda7a" stroke-width="0.6"/><polygon points="1499.6,434.8 1506.9,407.8 1473.2,418.9" fill="#ffd65b" stroke="#ffd65b" stroke-width="0.6"/><polygon points="1473.2,418.9 1506.9,407.8 1480.5,391.9" fill="#f2ff54" stroke="#f2ff54" stroke-width="0.6"/><polygon points="1506.9,407.8 1514.1,380.8 1480.5,391.9" fill="#f9ff3c" stroke="#f9ff3c" stroke-width="0.6"/><polygon points="1480.5,391.9 1514.1,380.8 1487.8,364.9" fill="#cbff2e" stroke="#cbff2e" stroke-width="0.6"/><polygon points="1514.1,380.8 1521.4,353.8 1487.8,364.9" fill="#d2ff1d" stroke="#d2ff1d" stroke-width="0.6"/><polygon points="1487.8,364.9 1521.4,353.8 1495.1,337.9" fill="#aeff14" stroke="#aeff14" stroke-width="0.6"/><polygon points="1521.4,353.8 1528.7,326.8 1495.1,337.9" fill="#b5ff08" stroke="#b5ff08" stroke-width="0.6"/><polygon points="1495.1,337.9 1528.7,326.8 1502.4,310.9" fill="#98ff03" stroke="#98ff03" stroke-width="0.6"/><polygon points="1463.1,569.8 1496.7,558.6 1470.4,542.8" fill="#ff06d0" stroke="#ff06d0" stroke-width="0.6"/><polygon points="1496.7,558.6 1504.0,531.6 1470.4,542.8" fill="#ff0daf" stroke="#ff0daf" stroke-width="0.6"/><polygon points="1470.4,542.8 1504.0,531.6 1477.7,515.8" fill="#ff20b2" stroke="#ff20b2" stroke-width="0.6"/><polygon points="1504.0,531.6 1511.3,504.6 1477.7,515.8" fill="#ff2794" stroke="#ff2794" stroke-width="0.6"/><polygon points="1477.7,515.8 1511.3,504.6 1485.0,488.8" fill="#ff3f96" stroke="#ff3f96" stroke-width="0.6"/><polygon points="1511.3,504.6 1518.6,477.6 1485.0,488.8" fill="#ff447a" stroke="#ff447a" stroke-width="0.6"/><polygon points="1485.0,488.8 1518.6,477.6 1492.3,461.8" fill="#ff607a" stroke="#ff607a" stroke-width="0.6"/><polygon points="1518.6,477.6 1525.9,450.6 1492.3,461.8" fill="#ff6460" stroke="#ff6460" stroke-width="0.6"/><polygon points="1492.3,461.8 1525.9,450.6 1499.6,434.8" fill="#ff845f" stroke="#ff845f" stroke-width="0.6"/><polygon points="1525.9,450.6 1533.2,423.6 1499.6,434.8" fill="#ff8648" stroke="#ff8648" stroke-width="0.6"/><polygon points="1499.6,434.8 1533.2,423.6 1506.9,407.8" fill="#ffaa45" stroke="#ffaa45" stroke-width="0.6"/><polygon points="1533.2,423.6 1540.5,396.6 1506.9,407.8" fill="#ffaa31" stroke="#ffaa31" stroke-width="0.6"/><polygon points="1506.9,407.8 1540.5,396.6 1514.1,380.8" fill="#ffd12d" stroke="#ffd12d" stroke-width="0.6"/><polygon points="1540.5,396.6 1547.8,369.6 1514.1,380.8" fill="#ffce1c" stroke="#ffce1c" stroke-width="0.6"/><polygon points="1514.1,380.8 1547.8,369.6 1521.4,353.8" fill="#fff917" stroke="#fff917" stroke-width="0.6"/><polygon points="1547.8,369.6 1555.1,342.6 1521.4,353.8" fill="#fff409" stroke="#fff409" stroke-width="0.6"/><polygon points="1521.4,353.8 1555.1,342.6 1528.7,326.8" fill="#dfff03" stroke="#dfff03" stroke-width="0.6"/><polygon points="1496.7,558.6 1530.3,547.5 1504.0,531.6" fill="#ff0491" stroke="#ff0491" stroke-width="0.6"/><polygon points="1530.3,547.5 1537.6,520.5 1504.0,531.6" fill="#ff0a7a" stroke="#ff0a7a" stroke-width="0.6"/><polygon points="1504.0,531.6 1537.6,520.5 1511.3,504.6" fill="#ff1a7a" stroke="#ff1a7a" stroke-width="0.6"/><polygon points="1537.6,520.5 1544.9,493.5 1511.3,504.6" fill="#ff2064" stroke="#ff2064" stroke-width="0.6"/><polygon points="1511.3,504.6 1544.9,493.5 1518.6,477.6" fill="#ff3363" stroke="#ff3363" stroke-width="0.6"/><polygon points="1544.9,493.5 1552.2,466.5 1518.6,477.6" fill="#ff384f" stroke="#ff384f" stroke-width="0.6"/><polygon points="1518.6,477.6 1552.2,466.5 1525.9,450.6" fill="#ff4e4d" stroke="#ff4e4d" stroke-width="0.6"/><polygon points="1552.2,466.5 1559.5,439.5 1525.9,450.6" fill="#ff533b" stroke="#ff533b" stroke-width="0.6"/><polygon points="1525.9,450.6 1559.5,439.5 1533.2,423.6" fill="#ff6b38" stroke="#ff6b38" stroke-width="0.6"/><polygon points="1559.5,439.5 1566.8,412.5 1533.2,423.6" fill="#ff6e28" stroke="#ff6e28" stroke-width="0.6"/><polygon points="1533.2,423.6 1566.8,412.5 1540.5,396.6" fill="#ff8a24" stroke="#ff8a24" stroke-width="0.6"/><polygon points="1566.8,412.5 1574.1,385.5 1540.5,396.6" fill="#ff8b17" stroke="#ff8b17" stroke-width="0.6"/><polygon points="1540.5,396.6 1574.1,385.5 1547.8,369.6" fill="#ffaa12" stroke="#ffaa12" stroke-width="0.6"/><polygon points="1574.1,385.5 1581.4,358.5 1547.8,369.6" fill="#ffaa07" stroke="#ffaa07" stroke-width="0.6"/><polygon points="1547.8,369.6 1581.4,358.5 1555.1,342.6" fill="#ffca03" stroke="#ffca03" stroke-width="0.6"/><polygon points="1530.3,547.5 1563.9,536.4 1537.6,520.5" fill="#ff0466" stroke="#ff0466" stroke-width="0.6"/><polygon points="1563.9,536.4 1571.2,509.4 1537.6,520.5" fill="#ff0954" stroke="#ff0954" stroke-width="0.6"/><polygon points="1537.6,520.5 1571.2,509.4 1544.9,493.5" fill="#ff1553" stroke="#ff1553" stroke-width="0.6"/><polygon points="1571.2,509.4 1578.5,482.4 1544.9,493.5" fill="#ff1b43" stroke="#ff1b43" stroke-width="0.6"/><polygon points="1544.9,493.5 1578.5,482.4 1552.2,466.5" fill="#ff2b40" stroke="#ff2b40" stroke-width="0.6"/><polygon points="1578.5,482.4 1585.8,455.4 1552.2,466.5" fill="#ff2f32" stroke="#ff2f32" stroke-width="0.6"/><polygon points="1552.2,466.5 1585.8,455.4 1559.5,439.5" fill="#ff422f" stroke="#ff422f" stroke-width="0.6"/><polygon points="1585.8,455.4 1593.1,428.4 1559.5,439.5" fill="#ff4622" stroke="#ff4622" stroke-width="0.6"/><polygon points="1559.5,439.5 1593.1,428.4 1566.8,412.5" fill="#ff5a1e" stroke="#ff5a1e" stroke-width="0.6"/><polygon points="1593.1,428.4 1600.4,401.4 1566.8,412.5" fill="#ff5d13" stroke="#ff5d13" stroke-width="0.6"/><polygon points="1566.8,412.5 1600.4,401.4 1574.1,385.5" fill="#ff740f" stroke="#ff740f" stroke-width="0.6"/><polygon points="1600.4,401.4 1607.7,374.4 1574.1,385.5" fill="#ff7606" stroke="#ff7606" stroke-width="0.6"/><polygon points="1574.1,385.5 1607.7,374.4 1581.4,358.5" fill="#ff8e02" stroke="#ff8e02" stroke-width="0.6"/><polygon points="1563.9,536.4 1597.6,525.2 1571.2,509.4" fill="#ff0347" stroke="#ff0347" stroke-width="0.6"/><polygon points="1597.6,525.2 1604.8,498.2 1571.2,509.4" fill="#ff073a" stroke="#ff073a" stroke-width="0.6"/><polygon points="1571.2,509.4 1604.8,498.2 1578.5,482.4" fill="#ff1237" stroke="#ff1237" stroke-width="0.6"/><polygon points="1604.8,498.2 1612.1,471.2 1578.5,482.4" fill="#ff172b" stroke="#ff172b" stroke-width="0.6"/><polygon points="1578.5,482.4 1612.1,471.2 1585.8,455.4" fill="#ff2428" stroke="#ff2428" stroke-width="0.6"/><polygon points="1612.1,471.2 1619.4,444.2 1585.8,455.4" fill="#ff291d" stroke="#ff291d" stroke-width="0.6"/><polygon points="1585.8,455.4 1619.4,444.2 1593.1,428.4" fill="#ff381a" stroke="#ff381a" stroke-width="0.6"/><polygon points="1619.4,444.2 1626.7,417.2 1593.1,428.4" fill="#ff3c10" stroke="#ff3c10" stroke-width="0.6"/><polygon points="1593.1,428.4 1626.7,417.2 1600.4,401.4" fill="#ff4d0d" stroke="#ff4d0d" stroke-width="0.6"/><polygon points="1626.7,417.2 1634.0,390.2 1600.4,401.4" fill="#ff5005" stroke="#ff5005" stroke-width="0.6"/><polygon points="1600.4,401.4 1634.0,390.2 1607.7,374.4" fill="#ff6302" stroke="#ff6302" stroke-width="0.6"/><polygon points="1597.6,525.2 1631.2,514.1 1604.8,498.2" fill="#ff0330" stroke="#ff0330" stroke-width="0.6"/><polygon points="1631.2,514.1 1638.5,487.1 1604.8,498.2" fill="#ff0626" stroke="#ff0626" stroke-width="0.6"/><polygon points="1604.8,498.2 1638.5,487.1 1612.1,471.2" fill="#ff1023" stroke="#ff1023" stroke-width="0.6"/><polygon points="1638.5,487.1 1645.8,460.1 1612.1,471.2" fill="#ff141a" stroke="#ff141a" stroke-width="0.6"/><polygon points="1612.1,471.2 1645.8,460.1 1619.4,444.2" fill="#ff2017" stroke="#ff2017" stroke-width="0.6"/><polygon points="1645.8,460.1 1653.1,433.1 1619.4,444.2" fill="#ff240e" stroke="#ff240e" stroke-width="0.6"/><polygon points="1619.4,444.2 1653.1,433.1 1626.7,417.2" fill="#ff310b" stroke="#ff310b" stroke-width="0.6"/><polygon points="1653.1,433.1 1660.3,406.1 1626.7,417.2" fill="#ff3504" stroke="#ff3504" stroke-width="0.6"/><polygon points="1626.7,417.2 1660.3,406.1 1634.0,390.2" fill="#ff4302" stroke="#ff4302" stroke-width="0.6"/><polygon points="1631.2,514.1 1664.8,502.9 1638.5,487.1" fill="#ff021f" stroke="#ff021f" stroke-width="0.6"/><polygon points="1664.8,502.9 1672.1,475.9 1638.5,487.1" fill="#ff0617" stroke="#ff0617" stroke-width="0.6"/><polygon points="1638.5,487.1 1672.1,475.9 1645.8,460.1" fill="#ff0e14" stroke="#ff0e14" stroke-width="0.6"/><polygon points="1672.1,475.9 1679.4,448.9 1645.8,460.1" fill="#ff120d" stroke="#ff120d" stroke-width="0.6"/><polygon points="1645.8,460.1 1679.4,448.9 1653.1,433.1" fill="#ff1c0a" stroke="#ff1c0a" stroke-width="0.6"/><polygon points="1679.4,448.9 1686.7,421.9 1653.1,433.1" fill="#ff2004" stroke="#ff2004" stroke-width="0.6"/><polygon points="1653.1,433.1 1686.7,421.9 1660.3,406.1" fill="#ff2b01" stroke="#ff2b01" stroke-width="0.6"/><polygon points="1664.8,502.9 1698.4,491.8 1672.1,475.9" fill="#ff0212" stroke="#ff0212" stroke-width="0.6"/><polygon points="1698.4,491.8 1705.7,464.8 1672.1,475.9" fill="#ff050b" stroke="#ff050b" stroke-width="0.6"/><polygon points="1672.1,475.9 1705.7,464.8 1679.4,448.9" fill="#ff0d09" stroke="#ff0d09" stroke-width="0.6"/><polygon points="1705.7,464.8 1713.0,437.8 1679.4,448.9" fill="#ff1003" stroke="#ff1003" stroke-width="0.6"/><polygon points="1679.4,448.9 1713.0,437.8 1686.7,421.9" fill="#ff1901" stroke="#ff1901" stroke-width="0.6"/><polygon points="1698.4,491.8 1732.0,480.6 1705.7,464.8" fill="#ff0208" stroke="#ff0208" stroke-width="0.6"/><polygon points="1732.0,480.6 1739.3,453.6 1705.7,464.8" fill="#ff0403" stroke="#ff0403" stroke-width="0.6"/><polygon points="1705.7,464.8 1739.3,453.6 1713.0,437.8" fill="#ff0b01" stroke="#ff0b01" stroke-width="0.6"/><polygon points="1732.0,480.6 1765.6,469.5 1739.3,453.6" fill="#ff0201" stroke="#ff0201" stroke-width="0.6"/><defs><linearGradient id="ins1" x1="0" y1="0" x2="1" y2="1"><stop offset="0" stop-color="#b0ff00"/><stop offset="0.5" stop-color="#ffff00"/><stop offset="1" stop-color="#ffb800"/></linearGradient><linearGradient id="ins2" x1="0" y1="0" x2="1" y2="1"><stop offset="0" stop-color="#689a00"/><stop offset="0.5" stop-color="#969400"/><stop offset="1" stop-color="#9a6e00"/></linearGradient></defs><rect x="1648" y="164.5" width="251.7" height="188.5" fill="url(#ins1)"/><polygon points="1648,164.5 1777.4,164.5 1899.7,255.8 1899.7,341.2 1648,174.6" fill="url(#ins2)"/><polygon points="1777.4,164.5 1899.7,164.5 1899.7,255.8" fill="#242424"/></g></svg>
<canvas id="cie" width="747" height="507" style="position:absolute;left:1161px;top:157px"></canvas>
<canvas id="inset" width="252" height="189" style="position:absolute;left:1648px;top:164px"></canvas>
<svg style="position:absolute;left:0;top:0" width="1920" height="1030"><defs><linearGradient id="b0" x1="0" x2="1" y1="0" y2="0"><stop offset="0" stop-color="#fa1414"/><stop offset="0.12" stop-color="#c81010"/><stop offset="0.5" stop-color="#c81010"/><stop offset="1" stop-color="#5a0707"/></linearGradient><linearGradient id="b1" x1="0" x2="1" y1="0" y2="0"><stop offset="0" stop-color="#19ed19"/><stop offset="0.12" stop-color="#14be14"/><stop offset="0.5" stop-color="#14be14"/><stop offset="1" stop-color="#095509"/></linearGradient><linearGradient id="b2" x1="0" x2="1" y1="0" y2="0"><stop offset="0" stop-color="#1414fa"/><stop offset="0.12" stop-color="#1010c8"/><stop offset="0.5" stop-color="#1010c8"/><stop offset="1" stop-color="#07075a"/></linearGradient><linearGradient id="b3" x1="0" x2="1" y1="0" y2="0"><stop offset="0" stop-color="#14eded"/><stop offset="0.12" stop-color="#10bebe"/><stop offset="0.5" stop-color="#10bebe"/><stop offset="1" stop-color="#075555"/></linearGradient><linearGradient id="b4" x1="0" x2="1" y1="0" y2="0"><stop offset="0" stop-color="#f314f3"/><stop offset="0.12" stop-color="#c310c3"/><stop offset="0.5" stop-color="#c310c3"/><stop offset="1" stop-color="#570757"/></linearGradient><linearGradient id="b5" x1="0" x2="1" y1="0" y2="0"><stop offset="0" stop-color="#eded14"/><stop offset="0.12" stop-color="#bebe10"/><stop offset="0.5" stop-color="#bebe10"/><stop offset="1" stop-color="#555507"/></linearGradient><linearGradient id="b6" x1="0" x2="1" y1="0" y2="0"><stop offset="0" stop-color="#fa4b4b"/><stop offset="0.12" stop-color="#c83c3c"/><stop offset="0.5" stop-color="#c83c3c"/><stop offset="1" stop-color="#5a1b1b"/></linearGradient><linearGradient id="b7" x1="0" x2="1" y1="0" y2="0"><stop offset="0" stop-color="#4be74b"/><stop offset="0.12" stop-color="#3cb93c"/><stop offset="0.5" stop-color="#3cb93c"/><stop offset="1" stop-color="#1b531b"/></linearGradient><linearGradient id="b8" x1="0" x2="1" y1="0" y2="0"><stop offset="0" stop-color="#5757fa"/><stop offset="0.12" stop-color="#4646c8"/><stop offset="0.5" stop-color="#4646c8"/><stop offset="1" stop-color="#1f1f5a"/></linearGradient><linearGradient id="b9" x1="0" x2="1" y1="0" y2="0"><stop offset="0" stop-color="#57e7e7"/><stop offset="0.12" stop-color="#46b9b9"/><stop offset="0.5" stop-color="#46b9b9"/><stop offset="1" stop-color="#1f5353"/></linearGradient><linearGradient id="b10" x1="0" x2="1" y1="0" y2="0"><stop offset="0" stop-color="#f364f3"/><stop offset="0.12" stop-color="#c350c3"/><stop offset="0.5" stop-color="#c350c3"/><stop offset="1" stop-color="#572457"/></linearGradient><linearGradient id="b11" x1="0" x2="1" y1="0" y2="0"><stop offset="0" stop-color="#f3f364"/><stop offset="0.12" stop-color="#c3c350"/><stop offset="0.5" stop-color="#c3c350"/><stop offset="1" stop-color="#575724"/></linearGradient><linearGradient id="b12" x1="0" x2="1" y1="0" y2="0"><stop offset="0" stop-color="#fa7070"/><stop offset="0.12" stop-color="#c85a5a"/><stop offset="0.5" stop-color="#c85a5a"/><stop offset="1" stop-color="#5a2828"/></linearGradient><linearGradient id="b13" x1="0" x2="1" y1="0" y2="0"><stop offset="0" stop-color="#7df37d"/><stop offset="0.12" stop-color="#64c364"/><stop offset="0.5" stop-color="#64c364"/><stop offset="1" stop-color="#2d572d"/></linearGradient><linearGradient id="b14" x1="0" x2="1" y1="0" y2="0"><stop offset="0" stop-color="#7d7dff"/><stop offset="0.12" stop-color="#6464cd"/><stop offset="0.5" stop-color="#6464cd"/><stop offset="1" stop-color="#2d2d5c"/></linearGradient><linearGradient id="b15" x1="0" x2="1" y1="0" y2="0"><stop offset="0" stop-color="#7deded"/><stop offset="0.12" stop-color="#64bebe"/><stop offset="0.5" stop-color="#64bebe"/><stop offset="1" stop-color="#2d5555"/></linearGradient><linearGradient id="b16" x1="0" x2="1" y1="0" y2="0"><stop offset="0" stop-color="#fa7dfa"/><stop offset="0.12" stop-color="#c864c8"/><stop offset="0.5" stop-color="#c864c8"/><stop offset="1" stop-color="#5a2d5a"/></linearGradient><linearGradient id="b17" x1="0" x2="1" y1="0" y2="0"><stop offset="0" stop-color="#fafa89"/><stop offset="0.12" stop-color="#c8c86e"/><stop offset="0.5" stop-color="#c8c86e"/><stop offset="1" stop-color="#5a5a31"/></linearGradient><linearGradient id="b18" x1="0" x2="1" y1="0" y2="0"><stop offset="0" stop-color="#fa9696"/><stop offset="0.12" stop-color="#c87878"/><stop offset="0.5" stop-color="#c87878"/><stop offset="1" stop-color="#5a3636"/></linearGradient><linearGradient id="b19" x1="0" x2="1" y1="0" y2="0"><stop offset="0" stop-color="#a2f3a2"/><stop offset="0.12" stop-color="#82c382"/><stop offset="0.5" stop-color="#82c382"/><stop offset="1" stop-color="#3a573a"/></linearGradient><linearGradient id="b20" x1="0" x2="1" y1="0" y2="0"><stop offset="0" stop-color="#a2a2ff"/><stop offset="0.12" stop-color="#8282cd"/><stop offset="0.5" stop-color="#8282cd"/><stop offset="1" stop-color="#3a3a5c"/></linearGradient><linearGradient id="b21" x1="0" x2="1" y1="0" y2="0"><stop offset="0" stop-color="#aff3f3"/><stop offset="0.12" stop-color="#8cc3c3"/><stop offset="0.5" stop-color="#8cc3c3"/><stop offset="1" stop-color="#3f5757"/></linearGradient><linearGradient id="b22" x1="0" x2="1" y1="0" y2="0"><stop offset="0" stop-color="#faa2fa"/><stop offset="0.12" stop-color="#c882c8"/><stop offset="0.5" stop-color="#c882c8"/><stop offset="1" stop-color="#5a3a5a"/></linearGradient><linearGradient id="b23" x1="0" x2="1" y1="0" y2="0"><stop offset="0" stop-color="#f3f3af"/><stop offset="0.12" stop-color="#c3c38c"/><stop offset="0.5" stop-color="#c3c38c"/><stop offset="1" stop-color="#57573f"/></linearGradient><linearGradient id="b24" x1="0" x2="1" y1="0" y2="0"><stop offset="0" stop-color="#fabbbb"/><stop offset="0.12" stop-color="#c89696"/><stop offset="0.5" stop-color="#c89696"/><stop offset="1" stop-color="#5a4343"/></linearGradient><linearGradient id="b25" x1="0" x2="1" y1="0" y2="0"><stop offset="0" stop-color="#c8f3c8"/><stop offset="0.12" stop-color="#a0c3a0"/><stop offset="0.5" stop-color="#a0c3a0"/><stop offset="1" stop-color="#485748"/></linearGradient><linearGradient id="b26" x1="0" x2="1" y1="0" y2="0"><stop offset="0" stop-color="#c8c8ff"/><stop offset="0.12" stop-color="#a0a0cd"/><stop offset="0.5" stop-color="#a0a0cd"/><stop offset="1" stop-color="#48485c"/></linearGradient><linearGradient id="b27" x1="0" x2="1" y1="0" y2="0"><stop offset="0" stop-color="#d4fafa"/><stop offset="0.12" stop-color="#aac8c8"/><stop offset="0.5" stop-color="#aac8c8"/><stop offset="1" stop-color="#4c5a5a"/></linearGradient><linearGradient id="b28" x1="0" x2="1" y1="0" y2="0"><stop offset="0" stop-color="#facefa"/><stop offset="0.12" stop-color="#c8a5c8"/><stop offset="0.5" stop-color="#c8a5c8"/><stop offset="1" stop-color="#5a4a5a"/></linearGradient><linearGradient id="b29" x1="0" x2="1" y1="0" y2="0"><stop offset="0" stop-color="#f3f3ce"/><stop offset="0.12" stop-color="#c3c3a5"/><stop offset="0.5" stop-color="#c3c3a5"/><stop offset="1" stop-color="#57574a"/></linearGradient><linearGradient id="bw" x1="0" x2="1"><stop offset="0" stop-color="#fff"/><stop offset="0.55" stop-color="#f4f4f4"/><stop offset="1" stop-color="#888"/></linearGradient><linearGradient id="yb" x1="0" x2="0" y1="0" y2="1"><stop offset="0" stop-color="#cac600"/><stop offset="0.5" stop-color="#c2be00"/><stop offset="1" stop-color="#868200"/></linearGradient></defs>
<text x="28" y="171" font-size="39" fill="#f2f2f2" text-anchor="start" font-weight="400" stroke="#f2f2f2" stroke-width="0.7" textLength="373" lengthAdjust="spacingAndGlyphs" >Saturation Sweeps</text><text x="209" y="222.7" font-size="14" fill="#d8d8d8" text-anchor="middle" font-weight="400" stroke="#d8d8d8" stroke-width="0.35" textLength="91" lengthAdjust="spacingAndGlyphs" >DeltaE 2000</text><rect x="50.3" y="228.3" width="359.2" height="424.40000000000003" fill="#242424"/><line x1="96.8" y1="228.3" x2="96.8" y2="652.7" stroke="#8c8c8c" stroke-width="1.5"/><line x1="145.4" y1="228.3" x2="145.4" y2="652.7" stroke="#8c8c8c" stroke-width="1.5"/><line x1="192.6" y1="228.3" x2="192.6" y2="652.7" stroke="#8c8c8c" stroke-width="1.5"/><line x1="241.0" y1="228.3" x2="241.0" y2="652.7" stroke="#8c8c8c" stroke-width="1.5"/><line x1="288.6" y1="228.3" x2="288.6" y2="652.7" stroke="#8c8c8c" stroke-width="1.5"/><line x1="336.8" y1="228.3" x2="336.8" y2="652.7" stroke="#8c8c8c" stroke-width="1.5"/><line x1="383.7" y1="228.3" x2="383.7" y2="652.7" stroke="#8c8c8c" stroke-width="1.5"/><rect x="50.3" y="228.3" width="359.2" height="424.40000000000003" fill="none" stroke="#9a9a9a" stroke-width="1.5"/><line x1="44" y1="228.3" x2="50.3" y2="228.3" stroke="#bbb" stroke-width="1.5"/><line x1="44" y1="299.3" x2="50.3" y2="299.3" stroke="#bbb" stroke-width="1.5"/><line x1="44" y1="370.6" x2="50.3" y2="370.6" stroke="#bbb" stroke-width="1.5"/><line x1="44" y1="440.5" x2="50.3" y2="440.5" stroke="#bbb" stroke-width="1.5"/><line x1="44" y1="512" x2="50.3" y2="512" stroke="#bbb" stroke-width="1.5"/><line x1="44" y1="582.2" x2="50.3" y2="582.2" stroke="#bbb" stroke-width="1.5"/><line x1="44" y1="652.7" x2="50.3" y2="652.7" stroke="#bbb" stroke-width="1.5"/><line x1="50.3" y1="652.7" x2="50.3" y2="660" stroke="#ccc" stroke-width="1.5"/><text x="50.6" y="675.9" font-size="14" fill="#d0d0d0" text-anchor="middle" font-weight="400" stroke="#d0d0d0" stroke-width="0.35" textLength="9.4" lengthAdjust="spacingAndGlyphs" >0</text><line x1="96.8" y1="652.7" x2="96.8" y2="660" stroke="#ccc" stroke-width="1.5"/><text x="97.1" y="675.9" font-size="14" fill="#d0d0d0" text-anchor="middle" font-weight="400" stroke="#d0d0d0" stroke-width="0.35" textLength="9.4" lengthAdjust="spacingAndGlyphs" >2</text><line x1="145.4" y1="652.7" x2="145.4" y2="660" stroke="#ccc" stroke-width="1.5"/><text x="145.7" y="675.9" font-size="14" fill="#d0d0d0" text-anchor="middle" font-weight="400" stroke="#d0d0d0" stroke-width="0.35" textLength="9.4" lengthAdjust="spacingAndGlyphs" >4</text><line x1="192.6" y1="652.7" x2="192.6" y2="660" stroke="#ccc" stroke-width="1.5"/><text x="192.9" y="675.9" font-size="14" fill="#d0d0d0" text-anchor="middle" font-weight="400" stroke="#d0d0d0" stroke-width="0.35" textLength="9.4" lengthAdjust="spacingAndGlyphs" >6</text><line x1="241.0" y1="652.7" x2="241.0" y2="660" stroke="#ccc" stroke-width="1.5"/><text x="241.3" y="675.9" font-size="14" fill="#d0d0d0" text-anchor="middle" font-weight="400" stroke="#d0d0d0" stroke-width="0.35" textLength="9.4" lengthAdjust="spacingAndGlyphs" >8</text><line x1="288.6" y1="652.7" x2="288.6" y2="660" stroke="#ccc" stroke-width="1.5"/><text x="288.9" y="675.9" font-size="14" fill="#d0d0d0" text-anchor="middle" font-weight="400" stroke="#d0d0d0" stroke-width="0.35" textLength="18.7" lengthAdjust="spacingAndGlyphs" >10</text><line x1="336.8" y1="652.7" x2="336.8" y2="660" stroke="#ccc" stroke-width="1.5"/><text x="337.1" y="675.9" font-size="14" fill="#d0d0d0" text-anchor="middle" font-weight="400" stroke="#d0d0d0" stroke-width="0.35" textLength="18.7" lengthAdjust="spacingAndGlyphs" >12</text><line x1="383.7" y1="652.7" x2="383.7" y2="660" stroke="#ccc" stroke-width="1.5"/><text x="384.0" y="675.9" font-size="14" fill="#d0d0d0" text-anchor="middle" font-weight="400" stroke="#d0d0d0" stroke-width="0.35" textLength="18.7" lengthAdjust="spacingAndGlyphs" >14</text><text x="49.3" y="270" font-size="14" fill="#d0d0d0" text-anchor="end" font-weight="400" stroke="#d0d0d0" stroke-width="0.35" textLength="41" lengthAdjust="spacingAndGlyphs" >100%</text><text x="49.3" y="340.4" font-size="14" fill="#d0d0d0" text-anchor="end" font-weight="400" stroke="#d0d0d0" stroke-width="0.35" textLength="32" lengthAdjust="spacingAndGlyphs" >80%</text><text x="49.3" y="411" font-size="14" fill="#d0d0d0" text-anchor="end" font-weight="400" stroke="#d0d0d0" stroke-width="0.35" textLength="32" lengthAdjust="spacingAndGlyphs" >60%</text><text x="49.3" y="483" font-size="14" fill="#d0d0d0" text-anchor="end" font-weight="400" stroke="#d0d0d0" stroke-width="0.35" textLength="32" lengthAdjust="spacingAndGlyphs" >40%</text><text x="49.3" y="553" font-size="14" fill="#d0d0d0" text-anchor="end" font-weight="400" stroke="#d0d0d0" stroke-width="0.35" textLength="32" lengthAdjust="spacingAndGlyphs" >20%</text><text x="49.3" y="625" font-size="14" fill="#d0d0d0" text-anchor="end" font-weight="400" stroke="#d0d0d0" stroke-width="0.35" textLength="26.6" lengthAdjust="spacingAndGlyphs" >100</text><rect x="50.8" y="234.9" width="50.4495" height="6.8" fill="url(#b0)" stroke="#000" stroke-width="1.5"/><rect x="50.8" y="243.34" width="12.640099999999997" height="6.8" fill="url(#b1)" stroke="#000" stroke-width="1.5"/><rect x="50.8" y="251.78" width="31.78410000000001" height="6.8" fill="url(#b2)" stroke="#000" stroke-width="1.5"/><rect x="50.8" y="260.22" width="45.4242" height="6.8" fill="url(#b3)" stroke="#000" stroke-width="1.5"/><rect x="50.8" y="268.66" width="73.9009" height="6.8" fill="url(#b4)" stroke="#000" stroke-width="1.5"/><rect x="50.8" y="277.1" width="55.2355" height="6.8" fill="url(#b5)" stroke="#000" stroke-width="1.5"/><rect x="50.8" y="306.1" width="80.36199999999998" height="6.8" fill="url(#b6)" stroke="#000" stroke-width="1.5"/><rect x="50.8" y="314.54" width="24.126500000000007" height="6.8" fill="url(#b7)" stroke="#000" stroke-width="1.5"/><rect x="50.8" y="322.98" width="33.219899999999996" height="6.8" fill="url(#b8)" stroke="#000" stroke-width="1.5"/><rect x="50.8" y="331.42" width="43.0312" height="6.8" fill="url(#b9)" stroke="#000" stroke-width="1.5"/><rect x="50.8" y="339.86" width="56.9106" height="6.8" fill="url(#b10)" stroke="#000" stroke-width="1.5"/><rect x="50.8" y="348.3" width="56.9106" height="6.8" fill="url(#b11)" stroke="#000" stroke-width="1.5"/><rect x="50.8" y="377.30000000000007" width="75.3367" height="6.8" fill="url(#b12)" stroke="#000" stroke-width="1.5"/><rect x="50.8" y="385.74000000000007" width="29.86970000000001" height="6.8" fill="url(#b13)" stroke="#000" stroke-width="1.5"/><rect x="50.8" y="394.18000000000006" width="53.7997" height="6.8" fill="url(#b14)" stroke="#000" stroke-width="1.5"/><rect x="50.8" y="402.62000000000006" width="42.5526" height="6.8" fill="url(#b15)" stroke="#000" stroke-width="1.5"/><rect x="50.8" y="411.06000000000006" width="53.0818" height="6.8" fill="url(#b16)" stroke="#000" stroke-width="1.5"/><rect x="50.8" y="419.50000000000006" width="57.6285" height="6.8" fill="url(#b17)" stroke="#000" stroke-width="1.5"/><rect x="50.8" y="448.50000000000006" width="73.6616" height="6.8" fill="url(#b18)" stroke="#000" stroke-width="1.5"/><rect x="50.8" y="456.94000000000005" width="44.7063" height="6.8" fill="url(#b19)" stroke="#000" stroke-width="1.5"/><rect x="50.8" y="465.38000000000005" width="60.02149999999999" height="6.8" fill="url(#b20)" stroke="#000" stroke-width="1.5"/><rect x="50.8" y="473.82000000000005" width="43.9884" height="6.8" fill="url(#b21)" stroke="#000" stroke-width="1.5"/><rect x="50.8" y="482.26000000000005" width="55.2355" height="6.8" fill="url(#b22)" stroke="#000" stroke-width="1.5"/><rect x="50.8" y="490.70000000000005" width="50.4495" height="6.8" fill="url(#b23)" stroke="#000" stroke-width="1.5"/><rect x="50.8" y="519.7" width="67.91839999999999" height="6.8" fill="url(#b24)" stroke="#000" stroke-width="1.5"/><rect x="50.8" y="528.1400000000001" width="44.2277" height="6.8" fill="url(#b25)" stroke="#000" stroke-width="1.5"/><rect x="50.8" y="536.58" width="63.132400000000004" height="6.8" fill="url(#b26)" stroke="#000" stroke-width="1.5"/><rect x="50.8" y="545.0200000000001" width="45.1849" height="6.8" fill="url(#b27)" stroke="#000" stroke-width="1.5"/><rect x="50.8" y="553.46" width="60.2608" height="6.8" fill="url(#b28)" stroke="#000" stroke-width="1.5"/><rect x="50.8" y="561.9000000000001" width="53.7997" height="6.8" fill="url(#b29)" stroke="#000" stroke-width="1.5"/><rect x="50.8" y="640.0" width="107.00000000000001" height="6.8" fill="url(#bw)" stroke="#000" stroke-width="1.5"/><line x1="50.3" y1="228.3" x2="50.3" y2="652.7" stroke="#a8a8a8" stroke-width="1.8"/><line x1="74" y1="228.3" x2="74" y2="652.7" stroke="#0b840b" stroke-width="2"/><line x1="122.1" y1="228.3" x2="122.1" y2="652.7" stroke="#e0d400" stroke-width="2"/><line x1="289.9" y1="228.3" x2="289.9" y2="652.7" stroke="#d41010" stroke-width="2.2"/><text x="537.6" y="152.8" font-size="14" fill="#d8d8d8" text-anchor="middle" font-weight="400" stroke="#d8d8d8" stroke-width="0.35" textLength="48.599999999999994" lengthAdjust="spacingAndGlyphs" >DeltaL</text><rect x="469.6" y="159.1" width="165.39999999999998" height="325.0" fill="#242424" stroke="#9a9a9a" stroke-width="1.5"/><line x1="463.6" y1="159.1" x2="469.6" y2="159.1" stroke="#bbb" stroke-width="1.5"/><text x="463.3" y="165.29999999999998" font-size="14" fill="#d0d0d0" text-anchor="end" font-weight="400" stroke="#d0d0d0" stroke-width="0.35" textLength="17.8" lengthAdjust="spacingAndGlyphs" >15</text><line x1="469.6" y1="214.4" x2="635" y2="214.4" stroke="#8c8c8c" stroke-width="1.5"/><line x1="463.6" y1="214.4" x2="469.6" y2="214.4" stroke="#bbb" stroke-width="1.5"/><text x="463.3" y="220.6" font-size="14" fill="#d0d0d0" text-anchor="end" font-weight="400" stroke="#d0d0d0" stroke-width="0.35" textLength="17.8" lengthAdjust="spacingAndGlyphs" >10</text><line x1="469.6" y1="268.0" x2="635" y2="268.0" stroke="#8c8c8c" stroke-width="1.5"/><line x1="463.6" y1="268.0" x2="469.6" y2="268.0" stroke="#bbb" stroke-width="1.5"/><text x="463.3" y="274.2" font-size="14" fill="#d0d0d0" text-anchor="end" font-weight="400" stroke="#d0d0d0" stroke-width="0.35" textLength="9.3" lengthAdjust="spacingAndGlyphs" >5</text><line x1="469.6" y1="321.9" x2="635" y2="321.9" stroke="#8c8c8c" stroke-width="1.5"/><line x1="463.6" y1="321.9" x2="469.6" y2="321.9" stroke="#bbb" stroke-width="1.5"/><text x="463.3" y="328.09999999999997" font-size="14" fill="#d0d0d0" text-anchor="end" font-weight="400" stroke="#d0d0d0" stroke-width="0.35" textLength="9.3" lengthAdjust="spacingAndGlyphs" >0</text><line x1="469.6" y1="377.1" x2="635" y2="377.1" stroke="#8c8c8c" stroke-width="1.5"/><line x1="463.6" y1="377.1" x2="469.6" y2="377.1" stroke="#bbb" stroke-width="1.5"/><text x="463.3" y="383.3" font-size="14" fill="#d0d0d0" text-anchor="end" font-weight="400" stroke="#d0d0d0" stroke-width="0.35" textLength="14.5" lengthAdjust="spacingAndGlyphs" >-5</text><line x1="469.6" y1="430.7" x2="635" y2="430.7" stroke="#8c8c8c" stroke-width="1.5"/><line x1="463.6" y1="430.7" x2="469.6" y2="430.7" stroke="#bbb" stroke-width="1.5"/><text x="463.3" y="436.9" font-size="14" fill="#d0d0d0" text-anchor="end" font-weight="400" stroke="#d0d0d0" stroke-width="0.35" textLength="24.3" lengthAdjust="spacingAndGlyphs" >-10</text><line x1="463.6" y1="484.1" x2="469.6" y2="484.1" stroke="#bbb" stroke-width="1.5"/><text x="463.3" y="490.3" font-size="14" fill="#d0d0d0" text-anchor="end" font-weight="400" stroke="#d0d0d0" stroke-width="0.35" textLength="24.3" lengthAdjust="spacingAndGlyphs" >-15</text><line x1="469.6" y1="484.1" x2="469.6" y2="490.1" stroke="#bbb" stroke-width="1.5"/><line x1="635" y1="484.1" x2="635" y2="490.1" stroke="#bbb" stroke-width="1.5"/><rect x="487" y="287.27599999999995" width="131.29999999999995" height="34.624000000000024" fill="url(#yb)" stroke="#111" stroke-width="1.2"/><text x="552.7" y="501.5" font-size="14" fill="#d8d8d8" text-anchor="middle" font-weight="400" stroke="#d8d8d8" stroke-width="0.35" textLength="41" lengthAdjust="spacingAndGlyphs" >100%</text><text x="764.8" y="152.8" font-size="14" fill="#d8d8d8" text-anchor="middle" font-weight="400" stroke="#d8d8d8" stroke-width="0.35" textLength="48.599999999999994" lengthAdjust="spacingAndGlyphs" >DeltaC</text><rect x="697.2" y="159.1" width="165.79999999999995" height="325.0" fill="#242424" stroke="#9a9a9a" stroke-width="1.5"/><line x1="691.2" y1="159.1" x2="697.2" y2="159.1" stroke="#bbb" stroke-width="1.5"/><text x="690.9000000000001" y="165.29999999999998" font-size="14" fill="#d0d0d0" text-anchor="end" font-weight="400" stroke="#d0d0d0" stroke-width="0.35" textLength="17.8" lengthAdjust="spacingAndGlyphs" >15</text><line x1="697.2" y1="214.4" x2="863" y2="214.4" stroke="#8c8c8c" stroke-width="1.5"/><line x1="691.2" y1="214.4" x2="697.2" y2="214.4" stroke="#bbb" stroke-width="1.5"/><text x="690.9000000000001" y="220.6" font-size="14" fill="#d0d0d0" text-anchor="end" font-weight="400" stroke="#d0d0d0" stroke-width="0.35" textLength="17.8" lengthAdjust="spacingAndGlyphs" >10</text><line x1="697.2" y1="268.0" x2="863" y2="268.0" stroke="#8c8c8c" stroke-width="1.5"/><line x1="691.2" y1="268.0" x2="697.2" y2="268.0" stroke="#bbb" stroke-width="1.5"/><text x="690.9000000000001" y="274.2" font-size="14" fill="#d0d0d0" text-anchor="end" font-weight="400" stroke="#d0d0d0" stroke-width="0.35" textLength="9.3" lengthAdjust="spacingAndGlyphs" >5</text><line x1="697.2" y1="321.9" x2="863" y2="321.9" stroke="#8c8c8c" stroke-width="1.5"/><line x1="691.2" y1="321.9" x2="697.2" y2="321.9" stroke="#bbb" stroke-width="1.5"/><text x="690.9000000000001" y="328.09999999999997" font-size="14" fill="#d0d0d0" text-anchor="end" font-weight="400" stroke="#d0d0d0" stroke-width="0.35" textLength="9.3" lengthAdjust="spacingAndGlyphs" >0</text><line x1="697.2" y1="377.1" x2="863" y2="377.1" stroke="#8c8c8c" stroke-width="1.5"/><line x1="691.2" y1="377.1" x2="697.2" y2="377.1" stroke="#bbb" stroke-width="1.5"/><text x="690.9000000000001" y="383.3" font-size="14" fill="#d0d0d0" text-anchor="end" font-weight="400" stroke="#d0d0d0" stroke-width="0.35" textLength="14.5" lengthAdjust="spacingAndGlyphs" >-5</text><line x1="697.2" y1="430.7" x2="863" y2="430.7" stroke="#8c8c8c" stroke-width="1.5"/><line x1="691.2" y1="430.7" x2="697.2" y2="430.7" stroke="#bbb" stroke-width="1.5"/><text x="690.9000000000001" y="436.9" font-size="14" fill="#d0d0d0" text-anchor="end" font-weight="400" stroke="#d0d0d0" stroke-width="0.35" textLength="24.3" lengthAdjust="spacingAndGlyphs" >-10</text><line x1="691.2" y1="484.1" x2="697.2" y2="484.1" stroke="#bbb" stroke-width="1.5"/><text x="690.9000000000001" y="490.3" font-size="14" fill="#d0d0d0" text-anchor="end" font-weight="400" stroke="#d0d0d0" stroke-width="0.35" textLength="24.3" lengthAdjust="spacingAndGlyphs" >-15</text><line x1="697.2" y1="484.1" x2="697.2" y2="490.1" stroke="#bbb" stroke-width="1.5"/><line x1="863" y1="484.1" x2="863" y2="490.1" stroke="#bbb" stroke-width="1.5"/><rect x="714.7" y="321.9" width="130.79999999999995" height="13.649999999999977" fill="url(#yb)" stroke="#111" stroke-width="1.2"/><text x="779.5" y="501.5" font-size="14" fill="#d8d8d8" text-anchor="middle" font-weight="400" stroke="#d8d8d8" stroke-width="0.35" textLength="41" lengthAdjust="spacingAndGlyphs" >100%</text><text x="991" y="152.8" font-size="14" fill="#d8d8d8" text-anchor="middle" font-weight="400" stroke="#d8d8d8" stroke-width="0.35" textLength="48.599999999999994" lengthAdjust="spacingAndGlyphs" >DeltaH</text><rect x="924" y="159.1" width="166.20000000000005" height="325.0" fill="#242424" stroke="#9a9a9a" stroke-width="1.5"/><line x1="918" y1="159.1" x2="924" y2="159.1" stroke="#bbb" stroke-width="1.5"/><text x="917.7" y="165.29999999999998" font-size="14" fill="#d0d0d0" text-anchor="end" font-weight="400" stroke="#d0d0d0" stroke-width="0.35" textLength="17.8" lengthAdjust="spacingAndGlyphs" >15</text><line x1="924" y1="214.4" x2="1090.2" y2="214.4" stroke="#8c8c8c" stroke-width="1.5"/><line x1="918" y1="214.4" x2="924" y2="214.4" stroke="#bbb" stroke-width="1.5"/><text x="917.7" y="220.6" font-size="14" fill="#d0d0d0" text-anchor="end" font-weight="400" stroke="#d0d0d0" stroke-width="0.35" textLength="17.8" lengthAdjust="spacingAndGlyphs" >10</text><line x1="924" y1="268.0" x2="1090.2" y2="268.0" stroke="#8c8c8c" stroke-width="1.5"/><line x1="918" y1="268.0" x2="924" y2="268.0" stroke="#bbb" stroke-width="1.5"/><text x="917.7" y="274.2" font-size="14" fill="#d0d0d0" text-anchor="end" font-weight="400" stroke="#d0d0d0" stroke-width="0.35" textLength="9.3" lengthAdjust="spacingAndGlyphs" >5</text><line x1="924" y1="321.9" x2="1090.2" y2="321.9" stroke="#8c8c8c" stroke-width="1.5"/><line x1="918" y1="321.9" x2="924" y2="321.9" stroke="#bbb" stroke-width="1.5"/><text x="917.7" y="328.09999999999997" font-size="14" fill="#d0d0d0" text-anchor="end" font-weight="400" stroke="#d0d0d0" stroke-width="0.35" textLength="9.3" lengthAdjust="spacingAndGlyphs" >0</text><line x1="924" y1="377.1" x2="1090.2" y2="377.1" stroke="#8c8c8c" stroke-width="1.5"/><line x1="918" y1="377.1" x2="924" y2="377.1" stroke="#bbb" stroke-width="1.5"/><text x="917.7" y="383.3" font-size="14" fill="#d0d0d0" text-anchor="end" font-weight="400" stroke="#d0d0d0" stroke-width="0.35" textLength="14.5" lengthAdjust="spacingAndGlyphs" >-5</text><line x1="924" y1="430.7" x2="1090.2" y2="430.7" stroke="#8c8c8c" stroke-width="1.5"/><line x1="918" y1="430.7" x2="924" y2="430.7" stroke="#bbb" stroke-width="1.5"/><text x="917.7" y="436.9" font-size="14" fill="#d0d0d0" text-anchor="end" font-weight="400" stroke="#d0d0d0" stroke-width="0.35" textLength="24.3" lengthAdjust="spacingAndGlyphs" >-10</text><line x1="918" y1="484.1" x2="924" y2="484.1" stroke="#bbb" stroke-width="1.5"/><text x="917.7" y="490.3" font-size="14" fill="#d0d0d0" text-anchor="end" font-weight="400" stroke="#d0d0d0" stroke-width="0.35" textLength="24.3" lengthAdjust="spacingAndGlyphs" >-15</text><line x1="924" y1="484.1" x2="924" y2="490.1" stroke="#bbb" stroke-width="1.5"/><line x1="1090.2" y1="484.1" x2="1090.2" y2="490.1" stroke="#bbb" stroke-width="1.5"/><rect x="940.7" y="321.9" width="132.0" height="6.770399999999995" fill="url(#yb)" stroke="#111" stroke-width="1.2"/><text x="1006.7" y="501.5" font-size="14" fill="#d8d8d8" text-anchor="middle" font-weight="400" stroke="#d8d8d8" stroke-width="0.35" textLength="41" lengthAdjust="spacingAndGlyphs" >100%</text><rect x="431" y="517.5" width="681.7" height="168.5" fill="#000"/><rect x="455.4" y="525.5" width="114" height="68.5" fill="rgb(204, 201, 165)"/><rect x="455.4" y="594" width="114" height="68.2" fill="rgb(193, 191, 157)"/><rect x="455.4" y="525.5" width="114" height="136.7" fill="none" stroke="#e8e8e8" stroke-width="1.2"/><text x="512.4" y="677.5" font-size="12.5" fill="#f4f4f4" text-anchor="middle" font-weight="700" textLength="27" lengthAdjust="spacingAndGlyphs" >20%</text><rect x="588.45" y="525.5" width="114" height="68.5" fill="rgb(203, 199, 130)"/><rect x="588.45" y="594" width="114" height="68.2" fill="rgb(192, 190, 128)"/><rect x="588.45" y="525.5" width="114" height="136.7" fill="none" stroke="#e8e8e8" stroke-width="1.2"/><text x="645.45" y="677.5" font-size="12.5" fill="#f4f4f4" text-anchor="middle" font-weight="700" textLength="27" lengthAdjust="spacingAndGlyphs" >40%</text><rect x="721.5" y="525.5" width="114" height="68.5" fill="rgb(205, 202, 96)"/><rect x="721.5" y="594" width="114" height="68.2" fill="rgb(194, 192, 92)"/><rect x="721.5" y="525.5" width="114" height="136.7" fill="none" stroke="#e8e8e8" stroke-width="1.2"/><text x="778.5" y="677.5" font-size="12.5" fill="#f4f4f4" text-anchor="middle" font-weight="700" textLength="27" lengthAdjust="spacingAndGlyphs" >60%</text><rect x="854.55" y="525.5" width="114" height="68.5" fill="rgb(206, 198, 38)"/><rect x="854.55" y="594" width="114" height="68.2" fill="rgb(193, 188, 42)"/><rect x="854.55" y="525.5" width="114" height="136.7" fill="none" stroke="#e8e8e8" stroke-width="1.2"/><text x="911.55" y="677.5" font-size="12.5" fill="#f4f4f4" text-anchor="middle" font-weight="700" textLength="27" lengthAdjust="spacingAndGlyphs" >80%</text><rect x="987.6" y="525.5" width="114" height="68.5" fill="rgb(211, 206, 0)"/><rect x="987.6" y="594" width="114" height="68.2" fill="rgb(199, 195, 0)"/><rect x="987.6" y="525.5" width="114" height="136.7" fill="none" stroke="#e8e8e8" stroke-width="1.2"/><text x="1044.6" y="677.5" font-size="12.5" fill="#f4f4f4" text-anchor="middle" font-weight="700" textLength="34" lengthAdjust="spacingAndGlyphs" >100%</text><text x="0" y="0" font-size="12.5" fill="#eee" text-anchor="middle" font-weight="700" textLength="37" lengthAdjust="spacingAndGlyphs" transform="translate(446.5,554.7) rotate(-90)">Actual</text><text x="0" y="0" font-size="12.5" fill="#eee" text-anchor="middle" font-weight="700" textLength="37" lengthAdjust="spacingAndGlyphs" transform="translate(446.5,631.2) rotate(-90)">Target</text>
<text x="1519.7" y="151.6" font-size="14" fill="#d8d8d8" text-anchor="middle" font-weight="600" textLength="87" lengthAdjust="spacingAndGlyphs" >CIE 1931 xy</text><rect x="1161.8" y="157.0" width="745.4000000000001" height="506.29999999999995" fill="none" stroke="#9a9a9a" stroke-width="1.8"/><line x1="1155" y1="601.5" x2="1161.8" y2="601.5" stroke="#bbb" stroke-width="1.8"/><text x="1155" y="606.5" font-size="14" fill="#d0d0d0" text-anchor="end" font-weight="400" stroke="#d0d0d0" stroke-width="0.35" textLength="23.5" lengthAdjust="spacingAndGlyphs" >0,1</text><line x1="1155" y1="541.5" x2="1161.8" y2="541.5" stroke="#bbb" stroke-width="1.8"/><text x="1155" y="546.5" font-size="14" fill="#d0d0d0" text-anchor="end" font-weight="400" stroke="#d0d0d0" stroke-width="0.35" textLength="23.5" lengthAdjust="spacingAndGlyphs" >0,2</text><line x1="1155" y1="481.5" x2="1161.8" y2="481.5" stroke="#bbb" stroke-width="1.8"/><text x="1155" y="486.5" font-size="14" fill="#d0d0d0" text-anchor="end" font-weight="400" stroke="#d0d0d0" stroke-width="0.35" textLength="23.5" lengthAdjust="spacingAndGlyphs" >0,3</text><line x1="1155" y1="421.5" x2="1161.8" y2="421.5" stroke="#bbb" stroke-width="1.8"/><text x="1155" y="426.5" font-size="14" fill="#d0d0d0" text-anchor="end" font-weight="400" stroke="#d0d0d0" stroke-width="0.35" textLength="23.5" lengthAdjust="spacingAndGlyphs" >0,4</text><line x1="1155" y1="361.5" x2="1161.8" y2="361.5" stroke="#bbb" stroke-width="1.8"/><text x="1155" y="366.5" font-size="14" fill="#d0d0d0" text-anchor="end" font-weight="400" stroke="#d0d0d0" stroke-width="0.35" textLength="23.5" lengthAdjust="spacingAndGlyphs" >0,5</text><line x1="1155" y1="301.5" x2="1161.8" y2="301.5" stroke="#bbb" stroke-width="1.8"/><text x="1155" y="306.5" font-size="14" fill="#d0d0d0" text-anchor="end" font-weight="400" stroke="#d0d0d0" stroke-width="0.35" textLength="23.5" lengthAdjust="spacingAndGlyphs" >0,6</text><line x1="1155" y1="241.5" x2="1161.8" y2="241.5" stroke="#bbb" stroke-width="1.8"/><text x="1155" y="246.5" font-size="14" fill="#d0d0d0" text-anchor="end" font-weight="400" stroke="#d0d0d0" stroke-width="0.35" textLength="23.5" lengthAdjust="spacingAndGlyphs" >0,7</text><line x1="1155" y1="181.5" x2="1161.8" y2="181.5" stroke="#bbb" stroke-width="1.8"/><text x="1155" y="186.5" font-size="14" fill="#d0d0d0" text-anchor="end" font-weight="400" stroke="#d0d0d0" stroke-width="0.35" textLength="23.5" lengthAdjust="spacingAndGlyphs" >0,8</text><line x1="1155" y1="663.3" x2="1161.8" y2="663.3" stroke="#bbb" stroke-width="1.8"/><text x="1155" y="670.5" font-size="14" fill="#d0d0d0" text-anchor="end" font-weight="400" stroke="#d0d0d0" stroke-width="0.35" textLength="9.5" lengthAdjust="spacingAndGlyphs" >0</text><line x1="1161.8" y1="663.3" x2="1161.8" y2="670" stroke="#ccc" stroke-width="1.8"/><text x="1161.8" y="686.3" font-size="14" fill="#d0d0d0" text-anchor="middle" font-weight="400" stroke="#d0d0d0" stroke-width="0.35" textLength="9.5" lengthAdjust="spacingAndGlyphs" >0</text><line x1="1250.6" y1="663.3" x2="1250.6" y2="670" stroke="#ccc" stroke-width="1.8"/><text x="1251.6" y="686.3" font-size="14" fill="#d0d0d0" text-anchor="middle" font-weight="400" stroke="#d0d0d0" stroke-width="0.35" textLength="23" lengthAdjust="spacingAndGlyphs" >0,1</text><line x1="1339.3999999999999" y1="663.3" x2="1339.3999999999999" y2="670" stroke="#ccc" stroke-width="1.8"/><text x="1340.3999999999999" y="686.3" font-size="14" fill="#d0d0d0" text-anchor="middle" font-weight="400" stroke="#d0d0d0" stroke-width="0.35" textLength="23" lengthAdjust="spacingAndGlyphs" >0,2</text><line x1="1428.1999999999998" y1="663.3" x2="1428.1999999999998" y2="670" stroke="#ccc" stroke-width="1.8"/><text x="1429.1999999999998" y="686.3" font-size="14" fill="#d0d0d0" text-anchor="middle" font-weight="400" stroke="#d0d0d0" stroke-width="0.35" textLength="23" lengthAdjust="spacingAndGlyphs" >0,3</text><line x1="1517.0" y1="663.3" x2="1517.0" y2="670" stroke="#ccc" stroke-width="1.8"/><text x="1518.0" y="686.3" font-size="14" fill="#d0d0d0" text-anchor="middle" font-weight="400" stroke="#d0d0d0" stroke-width="0.35" textLength="23" lengthAdjust="spacingAndGlyphs" >0,4</text><line x1="1605.8" y1="663.3" x2="1605.8" y2="670" stroke="#ccc" stroke-width="1.8"/><text x="1606.8" y="686.3" font-size="14" fill="#d0d0d0" text-anchor="middle" font-weight="400" stroke="#d0d0d0" stroke-width="0.35" textLength="23" lengthAdjust="spacingAndGlyphs" >0,5</text><line x1="1694.6" y1="663.3" x2="1694.6" y2="670" stroke="#ccc" stroke-width="1.8"/><text x="1695.6" y="686.3" font-size="14" fill="#d0d0d0" text-anchor="middle" font-weight="400" stroke="#d0d0d0" stroke-width="0.35" textLength="23" lengthAdjust="spacingAndGlyphs" >0,6</text><line x1="1783.4" y1="663.3" x2="1783.4" y2="670" stroke="#ccc" stroke-width="1.8"/><text x="1784.4" y="686.3" font-size="14" fill="#d0d0d0" text-anchor="middle" font-weight="400" stroke="#d0d0d0" stroke-width="0.35" textLength="23" lengthAdjust="spacingAndGlyphs" >0,7</text><line x1="1872.1999999999998" y1="663.3" x2="1872.1999999999998" y2="670" stroke="#ccc" stroke-width="1.8"/><text x="1873.1999999999998" y="686.3" font-size="14" fill="#d0d0d0" text-anchor="middle" font-weight="400" stroke="#d0d0d0" stroke-width="0.35" textLength="23" lengthAdjust="spacingAndGlyphs" >0,8</text><rect x="1648" y="164.5" width="251.7" height="188.5" fill="none" stroke="#a8a8a8" stroke-width="2"/><rect x="1422.5" y="413.7" width="15" height="13" fill="none" stroke="#f2f2f2" stroke-width="1.5"/><rect x="1414.9" y="370.0" width="15" height="13" fill="none" stroke="#f2f2f2" stroke-width="1.5"/><rect x="1406.2" y="328.0" width="15" height="13" fill="none" stroke="#f2f2f2" stroke-width="1.5"/><rect x="1397.4" y="287.2" width="15" height="13" fill="none" stroke="#f2f2f2" stroke-width="1.5"/><rect x="1389.2" y="239.8" width="15" height="13" fill="none" stroke="#f2f2f2" stroke-width="1.5"/><rect x="1454.0" y="431.7" width="15" height="13" fill="none" stroke="#f2f2f2" stroke-width="1.5"/><rect x="1475.5" y="407.8" width="15" height="13" fill="none" stroke="#f2f2f2" stroke-width="1.5"/><rect x="1496.2" y="384.2" width="15" height="13" fill="none" stroke="#f2f2f2" stroke-width="1.5"/><rect x="1519.5" y="358.6" width="15" height="13" fill="none" stroke="#f2f2f2" stroke-width="1.5"/><rect x="1542.8" y="332.4" width="15" height="13" fill="none" stroke="#f2f2f2" stroke-width="1.5"/><rect x="1496.3" y="458.5" width="15" height="13" fill="none" stroke="#f2f2f2" stroke-width="1.5"/><rect x="1556.8" y="459.8" width="15" height="13" fill="none" stroke="#f2f2f2" stroke-width="1.5"/><rect x="1624.3" y="461.0" width="15" height="13" fill="none" stroke="#f2f2f2" stroke-width="1.5"/><rect x="1683.7" y="462.2" width="15" height="13" fill="none" stroke="#f2f2f2" stroke-width="1.5"/><rect x="1757.3" y="462.2" width="15" height="13" fill="none" stroke="#f2f2f2" stroke-width="1.5"/><rect x="1410.9" y="457.3" width="15" height="13" fill="none" stroke="#f2f2f2" stroke-width="1.5"/><rect x="1390.9" y="457.3" width="15" height="13" fill="none" stroke="#f2f2f2" stroke-width="1.5"/><rect x="1370.5" y="457.3" width="15" height="13" fill="none" stroke="#f2f2f2" stroke-width="1.5"/><rect x="1351.5" y="457.3" width="15" height="13" fill="none" stroke="#f2f2f2" stroke-width="1.5"/><rect x="1331.1" y="455.6" width="15" height="13" fill="none" stroke="#f2f2f2" stroke-width="1.5"/><rect x="1401.8" y="489.2" width="15" height="13" fill="none" stroke="#f2f2f2" stroke-width="1.5"/><rect x="1373.7" y="523.0" width="15" height="13" fill="none" stroke="#f2f2f2" stroke-width="1.5"/><rect x="1345.5" y="553.5" width="15" height="13" fill="none" stroke="#f2f2f2" stroke-width="1.5"/><rect x="1317.4" y="586.1" width="15" height="13" fill="none" stroke="#f2f2f2" stroke-width="1.5"/><rect x="1286.3" y="619.7" width="15" height="13" fill="none" stroke="#f2f2f2" stroke-width="1.5"/><rect x="1435.0" y="479.3" width="15" height="13" fill="none" stroke="#f2f2f2" stroke-width="1.5"/><rect x="1439.9" y="500.2" width="15" height="13" fill="none" stroke="#f2f2f2" stroke-width="1.5"/><rect x="1444.3" y="521.0" width="15" height="13" fill="none" stroke="#f2f2f2" stroke-width="1.5"/><rect x="1447.5" y="542.0" width="15" height="13" fill="none" stroke="#f2f2f2" stroke-width="1.5"/><rect x="1452.5" y="564.7" width="15" height="13" fill="none" stroke="#f2f2f2" stroke-width="1.5"/><rect x="1431.7" y="458.7" width="15" height="13" fill="none" stroke="#111" stroke-width="1.8"/><ellipse cx="1432.9" cy="422.9" rx="4.7" ry="4.2" fill="rgb(140, 180, 140)" stroke="#222" stroke-width="1.4"/><ellipse cx="1423.3" cy="378" rx="4.7" ry="4.2" fill="rgb(124, 177, 124)" stroke="#222" stroke-width="1.4"/><ellipse cx="1415.3" cy="336.5" rx="4.7" ry="4.2" fill="rgb(105, 174, 105)" stroke="#222" stroke-width="1.4"/><ellipse cx="1406.1" cy="292.7" rx="4.7" ry="4.2" fill="rgb(80, 170, 80)" stroke="#222" stroke-width="1.4"/><ellipse cx="1393.9" cy="246.3" rx="4.7" ry="4.2" fill="rgb(20, 160, 20)" stroke="#222" stroke-width="1.4"/><ellipse cx="1464.4" cy="438.5" rx="4.7" ry="4.2" fill="rgb(189, 188, 138)" stroke="#222" stroke-width="1.4"/><ellipse cx="1487.9" cy="414.5" rx="4.7" ry="4.2" fill="rgb(190, 188, 120)" stroke="#222" stroke-width="1.4"/><ellipse cx="1509.2" cy="388.7" rx="4.7" ry="4.2" fill="rgb(191, 188, 100)" stroke="#222" stroke-width="1.4"/><ellipse cx="1531.4" cy="364.3" rx="4.7" ry="4.2" fill="rgb(192, 189, 74)" stroke="#222" stroke-width="1.4"/><ellipse cx="1551.5" cy="341.5" rx="4.7" ry="4.2" fill="rgb(195, 190, 10)" stroke="#222" stroke-width="1.4"/><ellipse cx="1506.7" cy="463.8" rx="4.7" ry="4.2" fill="rgb(191, 138, 138)" stroke="#222" stroke-width="1.4"/><ellipse cx="1569.5" cy="465" rx="4.7" ry="4.2" fill="rgb(192, 120, 120)" stroke="#222" stroke-width="1.4"/><ellipse cx="1638" cy="465" rx="4.7" ry="4.2" fill="rgb(193, 100, 100)" stroke="#222" stroke-width="1.4"/><ellipse cx="1697.5" cy="465" rx="4.7" ry="4.2" fill="rgb(195, 74, 74)" stroke="#222" stroke-width="1.4"/><ellipse cx="1762" cy="468.7" rx="4.7" ry="4.2" fill="rgb(200, 10, 10)" stroke="#222" stroke-width="1.4"/><ellipse cx="1420.2" cy="465" rx="4.7" ry="4.2" fill="rgb(140, 181, 181)" stroke="#222" stroke-width="1.4"/><ellipse cx="1398" cy="465" rx="4.7" ry="4.2" fill="rgb(124, 179, 179)" stroke="#222" stroke-width="1.4"/><ellipse cx="1378" cy="465" rx="4.7" ry="4.2" fill="rgb(105, 176, 176)" stroke="#222" stroke-width="1.4"/><ellipse cx="1359.2" cy="465" rx="4.7" ry="4.2" fill="rgb(80, 173, 173)" stroke="#222" stroke-width="1.4"/><ellipse cx="1337.5" cy="465" rx="4.7" ry="4.2" fill="rgb(20, 165, 165)" stroke="#222" stroke-width="1.4"/><ellipse cx="1414.2" cy="495.9" rx="4.7" ry="4.2" fill="rgb(146, 146, 188)" stroke="#222" stroke-width="1.4"/><ellipse cx="1384.3" cy="528.9" rx="4.7" ry="4.2" fill="rgb(132, 132, 188)" stroke="#222" stroke-width="1.4"/><ellipse cx="1355.9" cy="560" rx="4.7" ry="4.2" fill="rgb(115, 115, 188)" stroke="#222" stroke-width="1.4"/><ellipse cx="1326.6" cy="593.7" rx="4.7" ry="4.2" fill="rgb(93, 93, 189)" stroke="#222" stroke-width="1.4"/><ellipse cx="1295.3" cy="628.5" rx="4.7" ry="4.2" fill="rgb(40, 40, 190)" stroke="#222" stroke-width="1.4"/><ellipse cx="1446.6" cy="487.3" rx="4.7" ry="4.2" fill="rgb(185, 143, 185)" stroke="#222" stroke-width="1.4"/><ellipse cx="1450.3" cy="508.7" rx="4.7" ry="4.2" fill="rgb(184, 128, 184)" stroke="#222" stroke-width="1.4"/><ellipse cx="1454.8" cy="530.4" rx="4.7" ry="4.2" fill="rgb(184, 110, 184)" stroke="#222" stroke-width="1.4"/><ellipse cx="1457.7" cy="548.7" rx="4.7" ry="4.2" fill="rgb(182, 86, 182)" stroke="#222" stroke-width="1.4"/><ellipse cx="1464" cy="570.2" rx="4.7" ry="4.2" fill="rgb(180, 30, 180)" stroke="#222" stroke-width="1.4"/><ellipse cx="1444" cy="465" rx="5" ry="4.5" fill="#fff" stroke="#222" stroke-width="1.5"/><rect x="1766.4" y="252.2" width="15" height="13" fill="none" stroke="#f4f4f4" stroke-width="2"/><ellipse cx="1779" cy="268" rx="5" ry="4.5" fill="rgb(190,185,10)" stroke="#222" stroke-width="1.5"/><text x="17.6" y="760.7" font-size="29.7" fill="#f2f2f2" text-anchor="start" font-weight="400" stroke="#f2f2f2" stroke-width="0.5" textLength="251" lengthAdjust="spacingAndGlyphs" >Current Reading</text><text x="17.6" y="805" font-size="26" fill="#f2f2f2" text-anchor="start" font-weight="400" stroke="#f2f2f2" stroke-width="0.5" textLength="118" lengthAdjust="spacingAndGlyphs" >x: 0,4389</text><text x="17.6" y="846.2" font-size="26" fill="#f2f2f2" text-anchor="start" font-weight="400" stroke="#f2f2f2" stroke-width="0.5" textLength="118" lengthAdjust="spacingAndGlyphs" >y: 0,5334</text><text x="17.6" y="887.5" font-size="26" fill="#f2f2f2" text-anchor="start" font-weight="400" stroke="#f2f2f2" stroke-width="0.5" textLength="111" lengthAdjust="spacingAndGlyphs" >fL: 49,74</text><text x="17.6" y="930.6" font-size="26" fill="#f2f2f2" text-anchor="start" font-weight="400" stroke="#f2f2f2" stroke-width="0.5" textLength="182.3" lengthAdjust="spacingAndGlyphs" >cd/m²: 170,44</text><text x="537" y="733" font-size="14" fill="#d8d8d8" text-anchor="middle" font-weight="400" stroke="#d8d8d8" stroke-width="0.35" textLength="96" lengthAdjust="spacingAndGlyphs" >RGB Balance</text><rect x="406.8" y="739.6" width="292.49999999999994" height="186.10000000000002" fill="#242424" stroke="#9a9a9a" stroke-width="1.5"/><line x1="400.8" y1="739.6" x2="406.8" y2="739.6" stroke="#bbb" stroke-width="1.5"/><text x="400.5" y="745.9" font-size="14" fill="#d0d0d0" text-anchor="end" font-weight="400" stroke="#d0d0d0" stroke-width="0.35" textLength="18" lengthAdjust="spacingAndGlyphs" >20</text><line x1="406.8" y1="786.9" x2="699.3" y2="786.9" stroke="#8c8c8c" stroke-width="1.5"/><line x1="400.8" y1="786.9" x2="406.8" y2="786.9" stroke="#bbb" stroke-width="1.5"/><text x="400.5" y="793.1999999999999" font-size="14" fill="#d0d0d0" text-anchor="end" font-weight="400" stroke="#d0d0d0" stroke-width="0.35" textLength="18" lengthAdjust="spacingAndGlyphs" >10</text><line x1="406.8" y1="832.8" x2="699.3" y2="832.8" stroke="#8c8c8c" stroke-width="1.5"/><line x1="400.8" y1="832.8" x2="406.8" y2="832.8" stroke="#bbb" stroke-width="1.5"/><text x="400.5" y="839.0999999999999" font-size="14" fill="#d0d0d0" text-anchor="end" font-weight="400" stroke="#d0d0d0" stroke-width="0.35" textLength="9.3" lengthAdjust="spacingAndGlyphs" >0</text><line x1="406.8" y1="879.2" x2="699.3" y2="879.2" stroke="#8c8c8c" stroke-width="1.5"/><line x1="400.8" y1="879.2" x2="406.8" y2="879.2" stroke="#bbb" stroke-width="1.5"/><text x="400.5" y="885.5" font-size="14" fill="#d0d0d0" text-anchor="end" font-weight="400" stroke="#d0d0d0" stroke-width="0.35" textLength="24.5" lengthAdjust="spacingAndGlyphs" >-10</text><line x1="400.8" y1="925.7" x2="406.8" y2="925.7" stroke="#bbb" stroke-width="1.5"/><text x="400.5" y="932.0" font-size="14" fill="#d0d0d0" text-anchor="end" font-weight="400" stroke="#d0d0d0" stroke-width="0.35" textLength="24.5" lengthAdjust="spacingAndGlyphs" >-20</text><line x1="406.8" y1="925.7" x2="406.8" y2="931.7" stroke="#bbb" stroke-width="1.5"/><line x1="699.3" y1="925.7" x2="699.3" y2="931.7" stroke="#bbb" stroke-width="1.5"/><defs><linearGradient id="gr" x1="0" x2="0" y1="0" y2="1"><stop offset="0" stop-color="#ff3030"/><stop offset="0.12" stop-color="#ff0000"/><stop offset="0.6" stop-color="#f00000"/><stop offset="1" stop-color="#a00000"/></linearGradient><linearGradient id="gg" x1="0" x2="0" y1="0" y2="1"><stop offset="0" stop-color="#20a020"/><stop offset="0.12" stop-color="#008000"/><stop offset="0.6" stop-color="#007800"/><stop offset="1" stop-color="#004a00"/></linearGradient><linearGradient id="gb" x1="0" x2="0" y1="0" y2="1"><stop offset="0" stop-color="#3030ff"/><stop offset="0.2" stop-color="#0000ff"/><stop offset="0.6" stop-color="#0000f0"/><stop offset="1" stop-color="#0000a0"/></linearGradient></defs><rect x="436.8" y="781.7" width="76.90000000000003" height="51.09999999999991" fill="url(#gr)" stroke="#000" stroke-width="1.5"/><rect x="515.6" y="788.5" width="75.69999999999993" height="44.299999999999955" fill="url(#gg)" stroke="#000" stroke-width="1.5"/><rect x="592.4" y="812" width="78.0" height="20.799999999999955" fill="url(#gb)" stroke="#000" stroke-width="1.5"/><text x="552.3" y="942" font-size="14" fill="#d8d8d8" text-anchor="middle" font-weight="400" stroke="#d8d8d8" stroke-width="0.35" textLength="41" lengthAdjust="spacingAndGlyphs" >100%</text><rect x="723.4" y="716.2" width="828.6" height="15.4" fill="#2b2b2b"/><rect x="723.4" y="731.6" width="828.6" height="15.4" fill="#181818"/><rect x="723.4" y="716.2" width="22.4" height="30.8" fill="#000"/><text x="937.5" y="738" font-size="17.5" fill="#f6f6f6" text-anchor="start" font-weight="700" textLength="46.6" lengthAdjust="spacingAndGlyphs" >20%</text><text x="1061.6" y="738" font-size="17.5" fill="#f6f6f6" text-anchor="start" font-weight="700" textLength="46.6" lengthAdjust="spacingAndGlyphs" >40%</text><text x="1186" y="738" font-size="17.5" fill="#f6f6f6" text-anchor="start" font-weight="700" textLength="46.6" lengthAdjust="spacingAndGlyphs" >60%</text><text x="1310.6" y="738" font-size="17.5" fill="#f6f6f6" text-anchor="start" font-weight="700" textLength="46.6" lengthAdjust="spacingAndGlyphs" >80%</text><text x="1435.6" y="738" font-size="17.5" fill="#f6f6f6" text-anchor="start" font-weight="700" textLength="60.5" lengthAdjust="spacingAndGlyphs" >100%</text><rect x="723.4" y="747" width="828.6" height="29.600000000000023" fill="#404040"/><rect x="723.4" y="747" width="22.4" height="29.600000000000023" fill="#2c2c2c"/><text x="753.4" y="769.4" font-size="22" fill="#f4f4f4" text-anchor="start" font-weight="400" stroke="#f4f4f4" stroke-width="0.5" textLength="91" lengthAdjust="spacingAndGlyphs" >x: CIE31</text><text x="937.5" y="769.4" font-size="22" fill="#f4f4f4" text-anchor="start" font-weight="400" stroke="#f4f4f4" stroke-width="0.5" textLength="78.4" lengthAdjust="spacingAndGlyphs" >0,3408</text><text x="1061.6" y="769.4" font-size="22" fill="#f4f4f4" text-anchor="start" font-weight="400" stroke="#f4f4f4" stroke-width="0.5" textLength="78.4" lengthAdjust="spacingAndGlyphs" >0,3672</text><text x="1186" y="769.4" font-size="22" fill="#f4f4f4" text-anchor="start" font-weight="400" stroke="#f4f4f4" stroke-width="0.5" textLength="78.4" lengthAdjust="spacingAndGlyphs" >0,3912</text><text x="1310.6" y="769.4" font-size="22" fill="#f4f4f4" text-anchor="start" font-weight="400" stroke="#f4f4f4" stroke-width="0.5" textLength="78.4" lengthAdjust="spacingAndGlyphs" >0,4162</text><text x="1435.6" y="769.4" font-size="22" fill="#f4f4f4" text-anchor="start" font-weight="400" stroke="#f4f4f4" stroke-width="0.5" textLength="78.4" lengthAdjust="spacingAndGlyphs" >0,4389</text><rect x="723.4" y="776.6" width="828.6" height="29.600000000000023" fill="#888888"/><rect x="723.4" y="776.6" width="22.4" height="29.600000000000023" fill="#222222"/><text x="753.4" y="799.4" font-size="22" fill="#f4f4f4" text-anchor="start" font-weight="400" stroke="#f4f4f4" stroke-width="0.5" textLength="92" lengthAdjust="spacingAndGlyphs" >y: CIE31</text><text x="937.5" y="799.4" font-size="22" fill="#f4f4f4" text-anchor="start" font-weight="400" stroke="#f4f4f4" stroke-width="0.5" textLength="78.4" lengthAdjust="spacingAndGlyphs" >0,3717</text><text x="1061.6" y="799.4" font-size="22" fill="#f4f4f4" text-anchor="start" font-weight="400" stroke="#f4f4f4" stroke-width="0.5" textLength="78.4" lengthAdjust="spacingAndGlyphs" >0,4116</text><text x="1186" y="799.4" font-size="22" fill="#f4f4f4" text-anchor="start" font-weight="400" stroke="#f4f4f4" stroke-width="0.5" textLength="78.4" lengthAdjust="spacingAndGlyphs" >0,4547</text><text x="1310.6" y="799.4" font-size="22" fill="#f4f4f4" text-anchor="start" font-weight="400" stroke="#f4f4f4" stroke-width="0.5" textLength="78.4" lengthAdjust="spacingAndGlyphs" >0,4954</text><text x="1435.6" y="799.4" font-size="22" fill="#f4f4f4" text-anchor="start" font-weight="400" stroke="#f4f4f4" stroke-width="0.5" textLength="78.4" lengthAdjust="spacingAndGlyphs" >0,5334</text><rect x="723.4" y="806.2" width="828.6" height="28.59999999999991" fill="#404040"/><rect x="723.4" y="806.2" width="22.4" height="28.59999999999991" fill="#2c2c2c"/><text x="753.4" y="828.5" font-size="22" fill="#f4f4f4" text-anchor="start" font-weight="400" stroke="#f4f4f4" stroke-width="0.5" textLength="15" lengthAdjust="spacingAndGlyphs" >Y</text><text x="937.5" y="828.5" font-size="22" fill="#f4f4f4" text-anchor="start" font-weight="400" stroke="#f4f4f4" stroke-width="0.5" textLength="106.6" lengthAdjust="spacingAndGlyphs" >178,4478</text><text x="1061.6" y="828.5" font-size="22" fill="#f4f4f4" text-anchor="start" font-weight="400" stroke="#f4f4f4" stroke-width="0.5" textLength="106.6" lengthAdjust="spacingAndGlyphs" >172,1078</text><text x="1186" y="828.5" font-size="22" fill="#f4f4f4" text-anchor="start" font-weight="400" stroke="#f4f4f4" stroke-width="0.5" textLength="106.6" lengthAdjust="spacingAndGlyphs" >173,3009</text><text x="1310.6" y="828.5" font-size="22" fill="#f4f4f4" text-anchor="start" font-weight="400" stroke="#f4f4f4" stroke-width="0.5" textLength="106.6" lengthAdjust="spacingAndGlyphs" >170,5134</text><text x="1435.6" y="828.5" font-size="22" fill="#f4f4f4" text-anchor="start" font-weight="400" stroke="#f4f4f4" stroke-width="0.5" textLength="106.6" lengthAdjust="spacingAndGlyphs" >170,4385</text><rect x="723.4" y="834.8" width="828.6" height="29.600000000000023" fill="#888888"/><rect x="723.4" y="834.8" width="22.4" height="29.600000000000023" fill="#222222"/><text x="753.4" y="857.7" font-size="22" fill="#f4f4f4" text-anchor="start" font-weight="400" stroke="#f4f4f4" stroke-width="0.5" textLength="166" lengthAdjust="spacingAndGlyphs" >Target x:CIE31</text><text x="937.5" y="857.7" font-size="22" fill="#f4f4f4" text-anchor="start" font-weight="400" stroke="#f4f4f4" stroke-width="0.5" textLength="78.4" lengthAdjust="spacingAndGlyphs" >0,3386</text><text x="1061.6" y="857.7" font-size="22" fill="#f4f4f4" text-anchor="start" font-weight="400" stroke="#f4f4f4" stroke-width="0.5" textLength="78.4" lengthAdjust="spacingAndGlyphs" >0,3620</text><text x="1186" y="857.7" font-size="22" fill="#f4f4f4" text-anchor="start" font-weight="400" stroke="#f4f4f4" stroke-width="0.5" textLength="78.4" lengthAdjust="spacingAndGlyphs" >0,3865</text><text x="1310.6" y="857.7" font-size="22" fill="#f4f4f4" text-anchor="start" font-weight="400" stroke="#f4f4f4" stroke-width="0.5" textLength="78.4" lengthAdjust="spacingAndGlyphs" >0,4114</text><text x="1435.6" y="857.7" font-size="22" fill="#f4f4f4" text-anchor="start" font-weight="400" stroke="#f4f4f4" stroke-width="0.5" textLength="78.4" lengthAdjust="spacingAndGlyphs" >0,4378</text><rect x="723.4" y="864.4" width="828.6" height="29.100000000000023" fill="#404040"/><rect x="723.4" y="864.4" width="22.4" height="29.100000000000023" fill="#2c2c2c"/><text x="753.4" y="887.2" font-size="22" fill="#f4f4f4" text-anchor="start" font-weight="400" stroke="#f4f4f4" stroke-width="0.5" textLength="166" lengthAdjust="spacingAndGlyphs" >Target y:CIE31</text><text x="937.5" y="887.2" font-size="22" fill="#f4f4f4" text-anchor="start" font-weight="400" stroke="#f4f4f4" stroke-width="0.5" textLength="78.4" lengthAdjust="spacingAndGlyphs" >0,3718</text><text x="1061.6" y="887.2" font-size="22" fill="#f4f4f4" text-anchor="start" font-weight="400" stroke="#f4f4f4" stroke-width="0.5" textLength="78.4" lengthAdjust="spacingAndGlyphs" >0,4105</text><text x="1186" y="887.2" font-size="22" fill="#f4f4f4" text-anchor="start" font-weight="400" stroke="#f4f4f4" stroke-width="0.5" textLength="78.4" lengthAdjust="spacingAndGlyphs" >0,4510</text><text x="1310.6" y="887.2" font-size="22" fill="#f4f4f4" text-anchor="start" font-weight="400" stroke="#f4f4f4" stroke-width="0.5" textLength="78.4" lengthAdjust="spacingAndGlyphs" >0,4922</text><text x="1435.6" y="887.2" font-size="22" fill="#f4f4f4" text-anchor="start" font-weight="400" stroke="#f4f4f4" stroke-width="0.5" textLength="78.4" lengthAdjust="spacingAndGlyphs" >0,5359</text><rect x="723.4" y="893.5" width="828.6" height="29.100000000000023" fill="#888888"/><rect x="723.4" y="893.5" width="22.4" height="29.100000000000023" fill="#222222"/><text x="753.4" y="915.9" font-size="22" fill="#f4f4f4" text-anchor="start" font-weight="400" stroke="#f4f4f4" stroke-width="0.5" textLength="96" lengthAdjust="spacingAndGlyphs" >Target Y</text><text x="937.5" y="915.9" font-size="22" fill="#f4f4f4" text-anchor="start" font-weight="400" stroke="#f4f4f4" stroke-width="0.5" textLength="106.6" lengthAdjust="spacingAndGlyphs" >162,5553</text><text x="1061.6" y="915.9" font-size="22" fill="#f4f4f4" text-anchor="start" font-weight="400" stroke="#f4f4f4" stroke-width="0.5" textLength="106.6" lengthAdjust="spacingAndGlyphs" >159,6599</text><text x="1186" y="915.9" font-size="22" fill="#f4f4f4" text-anchor="start" font-weight="400" stroke="#f4f4f4" stroke-width="0.5" textLength="106.6" lengthAdjust="spacingAndGlyphs" >157,2431</text><text x="1310.6" y="915.9" font-size="22" fill="#f4f4f4" text-anchor="start" font-weight="400" stroke="#f4f4f4" stroke-width="0.5" textLength="106.6" lengthAdjust="spacingAndGlyphs" >155,2502</text><text x="1435.6" y="915.9" font-size="22" fill="#f4f4f4" text-anchor="start" font-weight="400" stroke="#f4f4f4" stroke-width="0.5" textLength="106.6" lengthAdjust="spacingAndGlyphs" >153,5128</text>
</svg>
<div style="position:absolute;left:0px;top:952px;width:1920px;height:78px;background:linear-gradient(#4a4a4a,#232323)"></div><div style="position:absolute;left:0px;top:952px;width:1012px;height:78px;background:#2e2e2e"></div><div style="position:absolute;left:1px;top:953px;width:56px;height:75px;background:linear-gradient(#a9a9a9,#8a8a8a 40%,#5e5e5e);border-radius:5px"></div><div style="position:absolute;left:20px;top:955px;width:19px;height:19px;border-radius:50%;background:linear-gradient(#5a5a5a,#9a9a9a)"></div><svg style="position:absolute;left:20px;top:955px" width="19" height="19"><path d="M4.5 12 L9.5 6.5 L14.5 12 Z" fill="#222"/></svg><div style="position:absolute;left:8px;top:985px;width:43px;height:37px;background:#ffff00;border-radius:4px;box-shadow:inset 0 0 2px #880"></div><div style="position:absolute;left:65px;top:953px;width:187px;height:75px;background:linear-gradient(#adadad,#8e8e8e 25%,#747474 60%,#555);border-radius:5px"></div><div style="position:absolute;left:72px;top:959px;width:174px;height:45px;background:rgb(194, 194, 162);border-radius:4px;box-shadow:inset 0 1px 2px rgba(0,0,0,.35)"></div><div style="position:absolute;left:65px;top:1011px;width:187px;text-align:center;font-size:13.5px;line-height:13px;color:#262626;font-weight:400;-webkit-text-stroke:0.3px #262626;white-space:nowrap">20%</div><div style="position:absolute;left:255px;top:953px;width:187px;height:75px;background:linear-gradient(#adadad,#8e8e8e 25%,#747474 60%,#555);border-radius:5px"></div><div style="position:absolute;left:262px;top:959px;width:174px;height:45px;background:rgb(192, 192, 128);border-radius:4px;box-shadow:inset 0 1px 2px rgba(0,0,0,.35)"></div><div style="position:absolute;left:255px;top:1011px;width:187px;text-align:center;font-size:13.5px;line-height:13px;color:#262626;font-weight:400;-webkit-text-stroke:0.3px #262626;white-space:nowrap">40%</div><div style="position:absolute;left:445px;top:953px;width:187px;height:75px;background:linear-gradient(#adadad,#8e8e8e 25%,#747474 60%,#555);border-radius:5px"></div><div style="position:absolute;left:452px;top:959px;width:174px;height:45px;background:rgb(194, 192, 104);border-radius:4px;box-shadow:inset 0 1px 2px rgba(0,0,0,.35)"></div><div style="position:absolute;left:445px;top:1011px;width:187px;text-align:center;font-size:13.5px;line-height:13px;color:#262626;font-weight:400;-webkit-text-stroke:0.3px #262626;white-space:nowrap">60%</div><div style="position:absolute;left:635px;top:953px;width:187px;height:75px;background:linear-gradient(#adadad,#8e8e8e 25%,#747474 60%,#555);border-radius:5px"></div><div style="position:absolute;left:642px;top:959px;width:174px;height:45px;background:rgb(196, 190, 60);border-radius:4px;box-shadow:inset 0 1px 2px rgba(0,0,0,.35)"></div><div style="position:absolute;left:635px;top:1011px;width:187px;text-align:center;font-size:13.5px;line-height:13px;color:#262626;font-weight:400;-webkit-text-stroke:0.3px #262626;white-space:nowrap">80%</div><div style="position:absolute;left:825px;top:953px;width:187px;height:75px;background:linear-gradient(#1b1b1b,#1f1f1f 45%,#353535);border-radius:5px"></div><div style="position:absolute;left:832px;top:959px;width:174px;height:45px;background:rgb(193, 191, 0);border-radius:4px;box-shadow:inset 0 1px 2px rgba(0,0,0,.35)"></div><div style="position:absolute;left:825px;top:1011px;width:187px;text-align:center;font-size:13.5px;line-height:13px;color:#fff;font-weight:700;-webkit-text-stroke:0.3px #fff;white-space:nowrap">100%</div><div style="position:absolute;left:1516px;top:953px;width:60px;height:22px;background:linear-gradient(#b4b4b4,#9a9a9a 40%,#7a7a7a);border-radius:5px 5px 0 0"></div><div style="position:absolute;left:1537px;top:955px;width:17px;height:17px;border-radius:50%;background:linear-gradient(#6a6a6a,#aaa)"></div><svg style="position:absolute;left:1537px;top:955px" width="17" height="17"><path d="M4 11 L8.5 6 L13 11 Z" fill="#333"/></svg><div style="position:absolute;left:1516px;top:976px;width:60px;height:52px;background:linear-gradient(#b4b4b4,#9a9a9a 40%,#7a7a7a);border-radius:0 0 5px 5px"></div><div style="position:absolute;left:1527px;top:983px;width:38px;height:38px;border-radius:6px;border:3px solid #2a2a2a;background:linear-gradient(#d0d0d0,#a8a8a8);box-sizing:border-box"></div><div style="position:absolute;left:1537px;top:993px;width:18px;height:18px;background:linear-gradient(#222 55%,#000 55%)"></div><div style="position:absolute;left:1578.0px;top:953px;width:55.5px;height:37px;background:linear-gradient(#b4b4b4,#9a9a9a 40%,#7a7a7a);border-radius:5px 0 0 0"></div><div style="position:absolute;left:1593.0px;top:958px;width:26px;height:26px;border-radius:50%;background:linear-gradient(#777,#c0c0c0)"></div><div style="position:absolute;left:1634.5px;top:953px;width:55.5px;height:37px;background:linear-gradient(#b4b4b4,#9a9a9a 40%,#7a7a7a);"></div><div style="position:absolute;left:1649.5px;top:958px;width:26px;height:26px;border-radius:50%;background:linear-gradient(#777,#c0c0c0)"></div><div style="position:absolute;left:1691.0px;top:953px;width:55.5px;height:37px;background:linear-gradient(#b4b4b4,#9a9a9a 40%,#7a7a7a);"></div><div style="position:absolute;left:1706.0px;top:958px;width:26px;height:26px;border-radius:50%;background:linear-gradient(#777,#c0c0c0)"></div><div style="position:absolute;left:1747.5px;top:953px;width:55.5px;height:37px;background:linear-gradient(#b4b4b4,#9a9a9a 40%,#7a7a7a);"></div><div style="position:absolute;left:1762.5px;top:958px;width:26px;height:26px;border-radius:50%;background:linear-gradient(#777,#c0c0c0)"></div><div style="position:absolute;left:1804.0px;top:953px;width:55.5px;height:37px;background:linear-gradient(#b4b4b4,#9a9a9a 40%,#7a7a7a);"></div><div style="position:absolute;left:1819.0px;top:958px;width:26px;height:26px;border-radius:50%;background:linear-gradient(#777,#c0c0c0)"></div><svg style="position:absolute;left:1578px;top:953px" width="283" height="37"><g fill="#2a2a2a"><rect x="23" y="13.5" width="10" height="10"/><path d="M82.5 12.3 L92.5 18.5 L82.5 24.7 Z"/></g><g stroke="#2a2a2a" stroke-width="2.2" fill="none"><path d="M139.5 13 H137.3 V24.8 H139.5 M145.2 13 H147.4 V24.8 H145.2"/><ellipse cx="194.2" cy="18.5" rx="4.3" ry="2.8"/><ellipse cx="202.4" cy="18.5" rx="4.3" ry="2.8"/><path d="M249.3 17 A5.6 5.6 0 0 1 259.5 15.5 M259.9 20 A5.6 5.6 0 0 1 249.7 21.5"/></g><g fill="#2a2a2a"><circle cx="141.3" cy="18.7" r="1.1"/><circle cx="143.5" cy="18.7" r="1.1"/><path d="M257 11.5 L262.5 13.5 L260.5 18 Z"/><path d="M252.2 25.5 L246.7 23.5 L248.7 19 Z"/></g></svg><div style="position:absolute;left:1861px;top:953px;width:57px;height:37px;background:linear-gradient(#3a3a3a,#2c2c2c);border-radius:0 5px 0 0"></div><div style="position:absolute;left:1877px;top:958px;width:25px;height:25px;border-radius:50%;background:linear-gradient(#2a2a2a,#333)"></div><div style="position:absolute;left:1578px;top:991px;width:169.5px;height:37px;background:linear-gradient(#b4b4b4,#9a9a9a 40%,#7a7a7a);border-radius:5px 0 0 5px"></div><div style="position:absolute;left:1748.5px;top:991px;width:169.5px;height:37px;background:linear-gradient(#b4b4b4,#9a9a9a 40%,#7a7a7a);border-radius:0 5px 5px 0"></div><div style="position:absolute;left:1603px;top:997px;width:26px;height:26px;border-radius:50%;background:linear-gradient(#8a8a8a,#c4c4c4)"></div><div style="position:absolute;left:1869px;top:997px;width:26px;height:26px;border-radius:50%;background:linear-gradient(#8a8a8a,#c4c4c4)"></div><div style="position:absolute;left:1606.5px;top:996px;font-size:26px;line-height:26px;color:#2a2a2a;font-weight:400;white-space:nowrap;">«</div><div style="position:absolute;left:1873.5px;top:996px;font-size:26px;line-height:26px;color:#2a2a2a;font-weight:400;white-space:nowrap;">»</div><div style="position:absolute;left:1648.5px;top:996px;font-size:27.5px;line-height:27.5px;color:#333;font-weight:700;white-space:nowrap;letter-spacing:-0.2px">Back</div><div style="position:absolute;left:1782px;top:996px;font-size:27.5px;line-height:27.5px;color:#333;font-weight:700;white-space:nowrap;letter-spacing:1.9px">Next</div>
<script>
(function(){
var loc=[[0.1741,0.0050],[0.1738,0.0049],[0.1733,0.0048],[0.1726,0.0048],[0.1714,0.0051],[0.1703,0.0058],[0.1689,0.0069],[0.1669,0.0086],[0.1644,0.0109],[0.1611,0.0138],[0.1566,0.0177],[0.1510,0.0227],[0.1440,0.0297],[0.1355,0.0399],[0.1241,0.0578],[0.1096,0.0868],[0.0913,0.1327],[0.0687,0.2007],[0.0454,0.2950],[0.0235,0.4127],[0.0082,0.5384],[0.0039,0.6548],[0.0139,0.7502],[0.0389,0.8120],[0.0743,0.8338],[0.1142,0.8262],[0.1547,0.8059],[0.1929,0.7816],[0.2296,0.7543],[0.2658,0.7243],[0.3016,0.6923],[0.3373,0.6589],[0.3731,0.6245],[0.4087,0.5896],[0.4441,0.5547],[0.4788,0.5202],[0.5125,0.4866],[0.5448,0.4544],[0.5752,0.4242],[0.6029,0.3965],[0.6270,0.3725],[0.6482,0.3514],[0.6658,0.3340],[0.6801,0.3197],[0.6915,0.3083],[0.7006,0.2993],[0.7079,0.2920],[0.7140,0.2859],[0.7190,0.2809],[0.7230,0.2770],[0.7260,0.2740],[0.7300,0.2700],[0.7347,0.2653]];
// catmull-rom smoothing
var sm=[];var n=loc.length;
for(var i=0;i<n-1;i++){var p0=loc[Math.max(0,i-1)],p1=loc[i],p2=loc[i+1],p3=loc[Math.min(n-1,i+2)];
 for(var t=0;t<1;t+=0.25){var t2=t*t,t3=t2*t;
  sm.push([0.5*((2*p1[0])+(-p0[0]+p2[0])*t+(2*p0[0]-5*p1[0]+4*p2[0]-p3[0])*t2+(-p0[0]+3*p1[0]-3*p2[0]+p3[0])*t3),
           0.5*((2*p1[1])+(-p0[1]+p2[1])*t+(2*p0[1]-5*p1[1]+4*p2[1]-p3[1])*t2+(-p0[1]+3*p1[1]-3*p2[1]+p3[1])*t3)]);}}
sm.push(loc[n-1]);
var tri=[[0.68,0.32],[0.265,0.69],[0.15,0.06]];
var M=[[2.4934969,-0.9313836,-0.4027108],[-0.8294890,1.7626641,0.0236247],[0.0358458,-0.0761724,0.9568845]];
var G=1.2,OUT=0.6,BG=[36,36,36];
function xings(poly,y){var r=[];for(var i=0,j=poly.length-1;i<poly.length;j=i++){var a=poly[i],b=poly[j];
 if((a[1]>y)!=(b[1]>y)){r.push(a[0]+(y-a[1])*(b[0]-a[0])/(b[1]-a[1]));}}r.sort(function(p,q){return p-q});return r;}
function inside(xs,x){var c=0;for(var i=0;i<xs.length;i++){if(xs[i]<x)c++;}return c%2==1;}
function draw(id,fx,fy){
 var c=document.getElementById(id);if(!c||!c.getContext)return;var ctx=c.getContext('2d');
 var W=c.width,H=c.height,img=ctx.createImageData(W,H),d=img.data;
 for(var py=0;py<H;py++){var y=fy(py+0.5);
  var ya=fy(py+0.25),yb=fy(py+0.75);
  var xla=xings(sm,ya),xta=xings(tri,ya),xlb=xings(sm,yb),xtb=xings(tri,yb);
  for(var px=0;px<W;px++){var x=fx(px+0.5);var k=(py*W+px)*4;
   var x1=fx(px+0.25),x2=fx(px+0.75);
   var nt=(inside(xta,x1)?1:0)+(inside(xta,x2)?1:0)+(inside(xtb,x1)?1:0)+(inside(xtb,x2)?1:0);
   var nl=((inside(xla,x1)||inside(xta,x1))?1:0)+((inside(xla,x2)||inside(xta,x2))?1:0)+((inside(xlb,x1)||inside(xtb,x1))?1:0)+((inside(xlb,x2)||inside(xtb,x2))?1:0);
   var r=BG[0],g=BG[1],b=BG[2];
   if(nl>0){var yy=Math.max(y,1e-4);var X=x/yy,Z=(1-x-y)/yy;
    var R=M[0][0]*X+M[0][1]+M[0][2]*Z,Gc=M[1][0]*X+M[1][1]+M[1][2]*Z,B=M[2][0]*X+M[2][1]+M[2][2]*Z;
    R=Math.max(R,0);Gc=Math.max(Gc,0);B=Math.max(B,0);var mx=Math.max(R,Gc,B)||1;
    R=255*Math.pow(R/mx,G);Gc=255*Math.pow(Gc/mx,G);B=255*Math.pow(B/mx,G);
    var wt=nt/4,wd=(nl-nt)/4*OUT,wb=(4-nl)/4;
    r=R*(wt+wd)+BG[0]*wb;g=Gc*(wt+wd)+BG[1]*wb;b=B*(wt+wd)+BG[2]*wb;}
   d[k]=r;d[k+1]=g;d[k+2]=b;d[k+3]=255;}}
 ctx.putImageData(img,0,0);}
draw('cie',function(px){return (px+1161-1161.8)/888;},function(py){return (661.5-(py+157))/600;});
draw('inset',function(px){return 0.4378+(px+1648-1773.9)/5140;},function(py){return 0.5359-(py+164-258.75)/3855;});
})();
</script>
</body></html>
